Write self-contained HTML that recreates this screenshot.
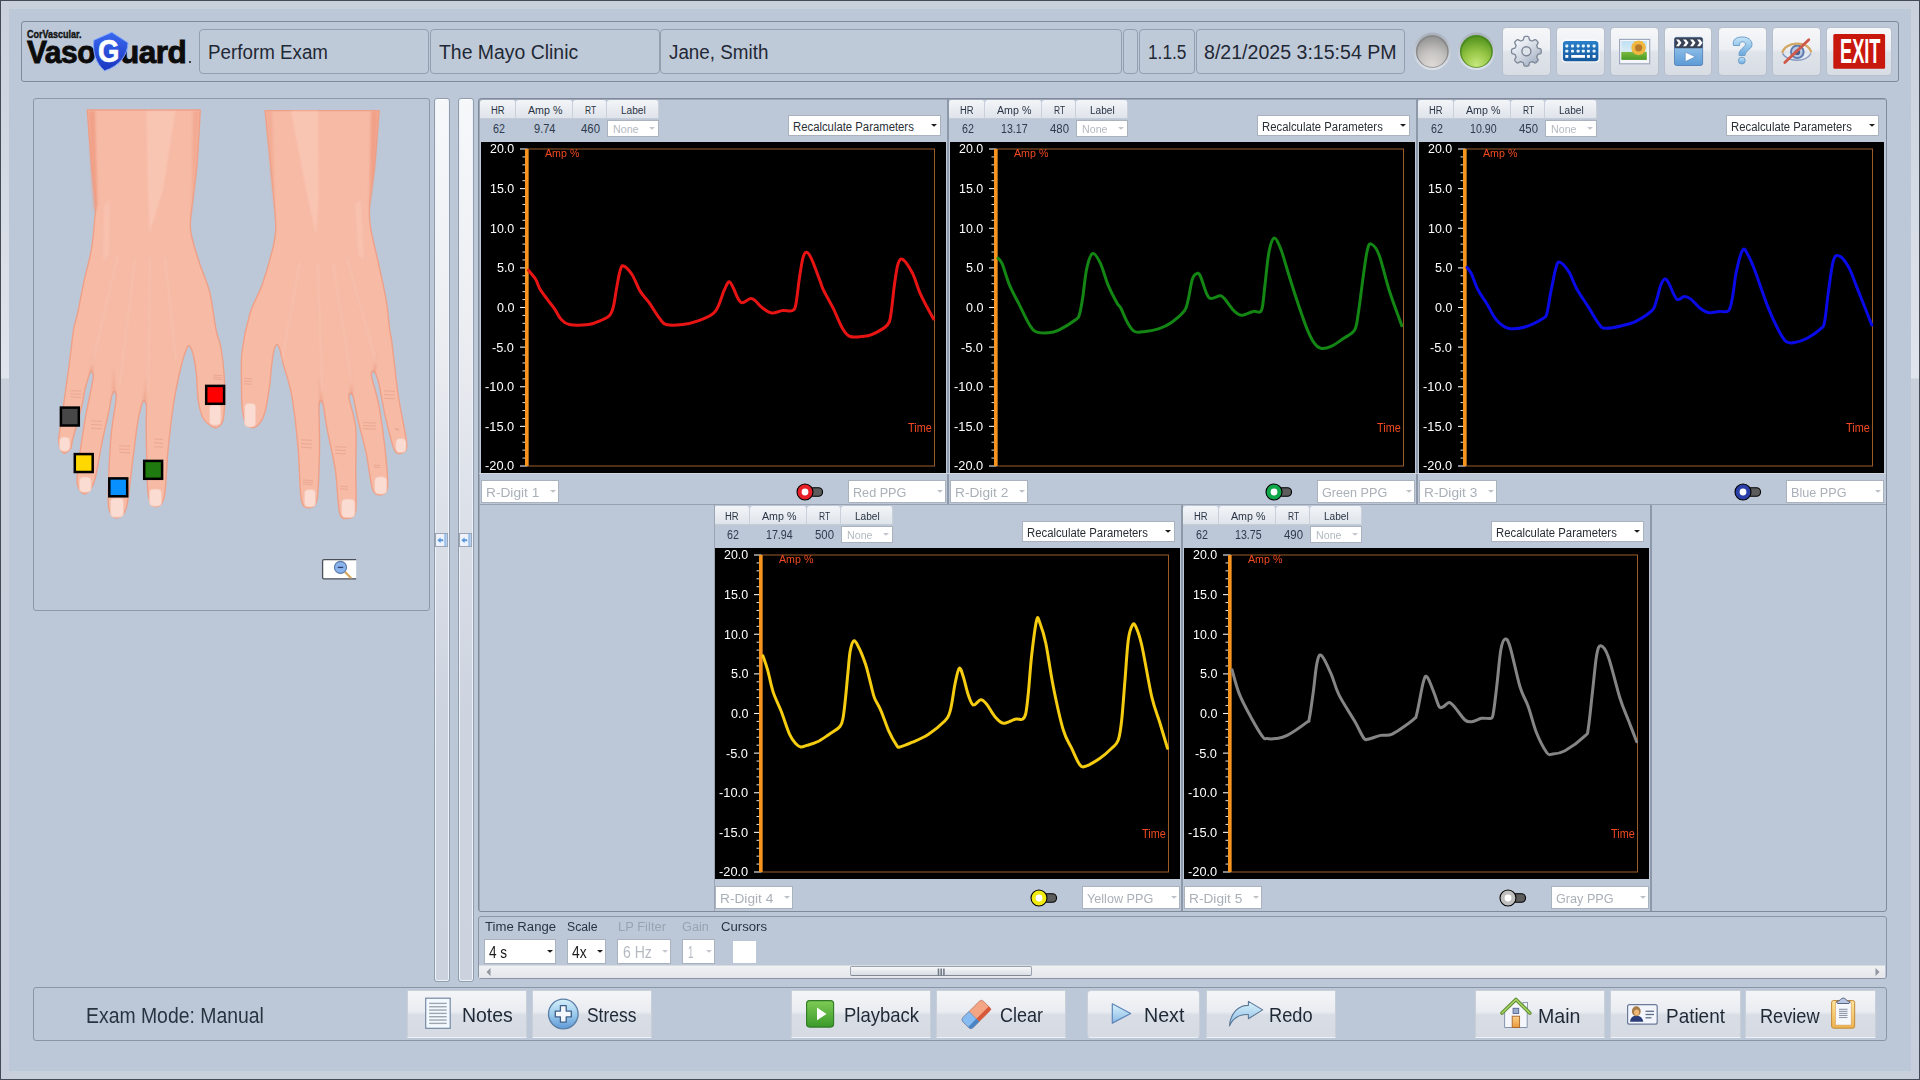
<!DOCTYPE html><html><head><meta charset="utf-8"><style>
*{margin:0;padding:0;box-sizing:border-box}
html,body{width:1920px;height:1080px;overflow:hidden}
body{position:relative;background:#454b54;font-family:"Liberation Sans", sans-serif;}
.dd{position:absolute;background:#fff;border:1px solid #c9d0da;}
.btn{position:absolute;background:linear-gradient(#eef1f6 0%,#e2e7ee 45%,#d3dae4 55%,#d9dfe8 100%);border:1px solid #aab4c2;border-radius:2px;}
.tab{position:absolute;background:linear-gradient(#eceff4,#d9dfe7);border-top:1px solid #c6ced9;border-right:1px solid #c6ced9;border-radius:3px 3px 0 0;}
</style></head><body>
<div style="position:absolute;left:1px;top:1px;width:1918px;height:1078px;background:#c8d0dc"></div><div style="position:absolute;left:9px;top:9px;width:1902px;height:1062px;background:#bcc8d8"></div><div style="position:absolute;left:1px;top:1px;width:8px;height:1078px;background:linear-gradient(#cad1dd 0px,#d2d8e2 150px,#e1e5ed 377px,#c9cfdb 378px,#c8cedb 1078px)"></div><div style="position:absolute;left:1911px;top:1px;width:8px;height:1078px;background:linear-gradient(#cad1dd 0px,#d2d8e2 150px,#e1e5ed 377px,#c9cfdb 378px,#c8cedb 1078px)"></div><div style="position:absolute;left:21px;top:21px;width:1878px;height:61px;border:1px solid #7f8a99;border-radius:3px;background:#bcc8d8"></div><div style="position:absolute;left:199px;top:29px;width:230px;height:45px;border:1px solid #939eae;border-radius:4px;background:#bfcad9"></div><div style="position:absolute;left:207.90px;top:41.52px;font-size:20.35px;color:#1f2835;white-space:nowrap;line-height:1;transform-origin:0 0;transform:scaleX(0.9229);">Perform Exam</div><div style="position:absolute;left:430px;top:29px;width:230px;height:45px;border:1px solid #939eae;border-radius:4px;background:#bfcad9"></div><div style="position:absolute;left:438.60px;top:41.52px;font-size:20.35px;color:#1f2835;white-space:nowrap;line-height:1;transform-origin:0 0;transform:scaleX(0.9541);">The Mayo Clinic</div><div style="position:absolute;left:660px;top:29px;width:462px;height:45px;border:1px solid #939eae;border-radius:4px;background:#bfcad9"></div><div style="position:absolute;left:668.50px;top:41.52px;font-size:20.35px;color:#1f2835;white-space:nowrap;line-height:1;transform-origin:0 0;transform:scaleX(0.9250);">Jane, Smith</div><div style="position:absolute;left:1123px;top:29px;width:15px;height:45px;border:1px solid #939eae;border-radius:4px;background:#bfcad9"></div><div style="position:absolute;left:1139px;top:29px;width:56px;height:45px;border:1px solid #939eae;border-radius:4px;background:#bfcad9"></div><div style="position:absolute;left:1148.00px;top:41.52px;font-size:20.35px;color:#1f2835;white-space:nowrap;line-height:1;transform-origin:0 0;transform:scaleX(0.8503);">1.1.5</div><div style="position:absolute;left:1196px;top:29px;width:209px;height:45px;border:1px solid #939eae;border-radius:4px;background:#bfcad9"></div><div style="position:absolute;left:1203.80px;top:41.52px;font-size:20.35px;color:#1f2835;white-space:nowrap;line-height:1;transform-origin:0 0;transform:scaleX(0.9619);">8/21/2025 3:15:54 PM</div><div style="position:absolute;left:1501.8px;top:27.2px;width:49.200000000000045px;height:48.6px;background:linear-gradient(#f6f7f9 0%,#eceff3 45%,#dfe4ea 52%,#d8dde5 100%);border:1px solid #b7c0cc;border-radius:4px"></div><div style="position:absolute;left:1556px;top:27.2px;width:48.90000000000009px;height:48.6px;background:linear-gradient(#f6f7f9 0%,#eceff3 45%,#dfe4ea 52%,#d8dde5 100%);border:1px solid #b7c0cc;border-radius:4px"></div><div style="position:absolute;left:1610px;top:27.2px;width:48.700000000000045px;height:48.6px;background:linear-gradient(#f6f7f9 0%,#eceff3 45%,#dfe4ea 52%,#d8dde5 100%);border:1px solid #b7c0cc;border-radius:4px"></div><div style="position:absolute;left:1664.1px;top:27.2px;width:48.40000000000009px;height:48.6px;background:linear-gradient(#f6f7f9 0%,#eceff3 45%,#dfe4ea 52%,#d8dde5 100%);border:1px solid #b7c0cc;border-radius:4px"></div><div style="position:absolute;left:1718.4px;top:27.2px;width:48.59999999999991px;height:48.6px;background:linear-gradient(#f6f7f9 0%,#eceff3 45%,#dfe4ea 52%,#d8dde5 100%);border:1px solid #b7c0cc;border-radius:4px"></div><div style="position:absolute;left:1772.3px;top:27.2px;width:48.5px;height:48.6px;background:linear-gradient(#f6f7f9 0%,#eceff3 45%,#dfe4ea 52%,#d8dde5 100%);border:1px solid #b7c0cc;border-radius:4px"></div><div style="position:absolute;left:1826.3px;top:27.2px;width:66.0px;height:48.6px;background:linear-gradient(#f6f7f9 0%,#eceff3 45%,#dfe4ea 52%,#d8dde5 100%);border:1px solid #b7c0cc;border-radius:4px"></div><svg style="position:absolute;left:0;top:0" width="1920" height="90"><defs><radialGradient id="ledG" cx="0.5" cy="0.75" r="0.7"><stop offset="0" stop-color="#dcdad6"/><stop offset="1" stop-color="#a9a9a9"/></radialGradient><radialGradient id="ledGr" cx="0.5" cy="0.85" r="0.8"><stop offset="0" stop-color="#c4e87a"/><stop offset="0.6" stop-color="#8cc040"/><stop offset="1" stop-color="#5e9e22"/></radialGradient><linearGradient id="gearG" x1="0.2" y1="0.1" x2="0.8" y2="0.9"><stop offset="0" stop-color="#f4f6fb"/><stop offset="0.5" stop-color="#d4dae4"/><stop offset="1" stop-color="#a6b2c4"/></linearGradient><linearGradient id="skyG" x1="0" y1="0" x2="0" y2="1"><stop offset="0" stop-color="#bfe0f4"/><stop offset="0.55" stop-color="#d8ecf4"/><stop offset="0.6" stop-color="#78b840"/><stop offset="1" stop-color="#4a9a24"/></linearGradient><linearGradient id="filmB" x1="0" y1="0" x2="0" y2="1"><stop offset="0" stop-color="#a8d2f2"/><stop offset="1" stop-color="#5c9ad6"/></linearGradient><linearGradient id="qG" x1="0" y1="0" x2="0" y2="1"><stop offset="0" stop-color="#c4e4f8"/><stop offset="1" stop-color="#6aa8dc"/></linearGradient><linearGradient id="shG" x1="0" y1="0" x2="0" y2="1"><stop offset="0" stop-color="#3c66e8"/><stop offset="1" stop-color="#1c3cc0"/></linearGradient></defs><linearGradient id="sockG" x1="0" y1="0" x2="0" y2="1"><stop offset="0" stop-color="#a9b1bd"/><stop offset="0.5" stop-color="#c4cbd6"/><stop offset="1" stop-color="#dde2ea"/></linearGradient><radialGradient id="ledG2" cx="0.5" cy="0.92" r="0.85"><stop offset="0" stop-color="#dedad6"/><stop offset="0.55" stop-color="#c4c2c0"/><stop offset="1" stop-color="#9c9c9c"/></radialGradient><radialGradient id="ledGr2" cx="0.5" cy="0.92" r="0.85"><stop offset="0" stop-color="#c6e87c"/><stop offset="0.55" stop-color="#94c444"/><stop offset="1" stop-color="#5e9c24"/></radialGradient><circle cx="1432.3" cy="51.3" r="18.8" fill="url(#sockG)"/><circle cx="1432.3" cy="51.3" r="16.4" fill="#8a8a8a"/><circle cx="1432.3" cy="52.2" r="14.9" fill="url(#ledG2)"/><circle cx="1476.4" cy="51.3" r="18.8" fill="url(#sockG)"/><circle cx="1476.4" cy="51.3" r="16.4" fill="#4a8a1c"/><circle cx="1476.4" cy="52.2" r="14.9" fill="url(#ledGr2)"/><path d="M1521.96,40.58 L1523.32,39.81 L1524.02,37.10 L1525.10,36.46 L1527.70,36.46 L1528.78,37.10 L1529.48,39.81 L1530.84,40.58 L1532.35,40.99 L1534.76,39.58 L1535.98,39.89 L1537.81,41.72 L1538.12,42.94 L1536.71,45.35 L1537.12,46.86 L1537.89,48.22 L1540.60,48.92 L1541.24,50.00 L1541.24,52.60 L1540.60,53.68 L1537.89,54.38 L1537.12,55.74 L1536.71,57.25 L1538.12,59.66 L1537.81,60.88 L1535.98,62.71 L1534.76,63.02 L1532.35,61.61 L1530.84,62.02 L1529.48,62.79 L1528.78,65.50 L1527.70,66.14 L1525.10,66.14 L1524.02,65.50 L1523.32,62.79 L1521.96,62.02 L1520.45,61.61 L1518.04,63.02 L1516.82,62.71 L1514.99,60.88 L1514.68,59.66 L1516.09,57.25 L1515.68,55.74 L1514.91,54.38 L1512.20,53.68 L1511.56,52.60 L1511.56,50.00 L1512.20,48.92 L1514.91,48.22 L1515.68,46.86 L1516.09,45.35 L1514.68,42.94 L1514.99,41.72 L1516.82,39.89 L1518.04,39.58 L1520.45,40.99 Z" fill="url(#gearG)" stroke="#7d8696" stroke-width="1.3" stroke-linejoin="round"/><circle cx="1526.4" cy="51.3" r="4.5" fill="#dfe3ea" stroke="#7d8696" stroke-width="1.4"/><rect x="1561.5" y="39.5" width="38.3" height="23.1" rx="4" fill="#ffffff" opacity="0.7"/><linearGradient id="kbG" x1="0" y1="0" x2="0" y2="1"><stop offset="0" stop-color="#2a7fca"/><stop offset="1" stop-color="#17589c"/></linearGradient><rect x="1562.9" y="40.9" width="35.5" height="20.3" rx="3.2" fill="url(#kbG)"/><rect x="1565.3" y="44.6" width="3" height="2.8" rx="0.8" fill="#e6f6ff"/><rect x="1571.0" y="44.6" width="3" height="2.8" rx="0.8" fill="#e6f6ff"/><rect x="1576.6" y="44.6" width="3" height="2.8" rx="0.8" fill="#e6f6ff"/><rect x="1581.8" y="44.6" width="3" height="2.8" rx="0.8" fill="#e6f6ff"/><rect x="1586.9" y="44.6" width="3" height="2.8" rx="0.8" fill="#e6f6ff"/><rect x="1592.6" y="44.6" width="3" height="2.8" rx="0.8" fill="#e6f6ff"/><rect x="1565.3" y="49.8" width="3" height="2.8" rx="0.8" fill="#e6f6ff"/><rect x="1571.0" y="49.8" width="3" height="2.8" rx="0.8" fill="#e6f6ff"/><rect x="1576.6" y="49.8" width="3" height="2.8" rx="0.8" fill="#e6f6ff"/><rect x="1581.8" y="49.8" width="3" height="2.8" rx="0.8" fill="#e6f6ff"/><rect x="1586.9" y="49.8" width="3" height="2.8" rx="0.8" fill="#e6f6ff"/><rect x="1592.6" y="49.8" width="3" height="2.8" rx="0.8" fill="#e6f6ff"/><rect x="1565.3" y="55" width="3" height="2.8" fill="#ffffff"/><rect x="1586.9" y="55" width="3" height="2.8" fill="#ffffff"/><rect x="1592.6" y="55" width="3" height="2.8" fill="#ffffff"/><rect x="1571.2" y="55" width="13.8" height="2.8" fill="#ffffff"/><rect x="1619.6" y="39.4" width="30.1" height="24.4" fill="#f4f6fa" stroke="#9aa4ba" stroke-width="1.1"/><rect x="1621.3" y="41.1" width="25.5" height="18.8" fill="url(#skyG)"/><circle cx="1643.80" cy="47.80" r="2.2" fill="#f0b840"/><circle cx="1643.10" cy="50.40" r="2.2" fill="#f0b840"/><circle cx="1641.20" cy="52.30" r="2.2" fill="#f0b840"/><circle cx="1638.60" cy="53.00" r="2.2" fill="#f0b840"/><circle cx="1636.00" cy="52.30" r="2.2" fill="#f0b840"/><circle cx="1634.10" cy="50.40" r="2.2" fill="#f0b840"/><circle cx="1633.40" cy="47.80" r="2.2" fill="#f0b840"/><circle cx="1634.10" cy="45.20" r="2.2" fill="#f0b840"/><circle cx="1636.00" cy="43.30" r="2.2" fill="#f0b840"/><circle cx="1638.60" cy="42.60" r="2.2" fill="#f0b840"/><circle cx="1641.20" cy="43.30" r="2.2" fill="#f0b840"/><circle cx="1643.10" cy="45.20" r="2.2" fill="#f0b840"/><circle cx="1638.6" cy="47.8" r="3.6" fill="#b87a2a"/><rect x="1674.5" y="37.4" width="28.1" height="28.1" rx="2" fill="url(#filmB)" stroke="#4a7ab0" stroke-width="0.8"/><rect x="1674.5" y="37.4" width="28.1" height="10.8" rx="1.5" fill="#3a4356"/><path d="M1676 39.5 L1679 39.5 L1681.5 42.8 L1679 46.2 L1676 46.2 L1678.5 42.8 Z" fill="#ffffff"/><path d="M1683 39.5 L1686 39.5 L1688.5 42.8 L1686 46.2 L1683 46.2 L1685.5 42.8 Z" fill="#ffffff"/><path d="M1690 39.5 L1693 39.5 L1695.5 42.8 L1693 46.2 L1690 46.2 L1692.5 42.8 Z" fill="#ffffff"/><path d="M1697 39.5 L1700 39.5 L1702.5 42.8 L1700 46.2 L1697 46.2 L1699.5 42.8 Z" fill="#ffffff"/><path d="M1685.3 52.1 L1695.2 56.8 L1685.3 61.6 Z" fill="#ffffff" stroke="#5a8ac0" stroke-width="0.6"/><path d="M1733.5 45.5 C1732 39 1737 37 1742.3 37 C1748 37 1752 40 1752 44.5 C1752 49.5 1745.5 50 1745 55.5 L1739 55.5 C1738.5 48.5 1745.5 47.5 1745.5 44.3 C1745.5 42.5 1744 41.8 1742.2 41.8 C1740.2 41.8 1739.5 43 1739.5 45.5 Z" fill="url(#qG)" stroke="#6e9ecc" stroke-width="1"/><circle cx="1741.8" cy="60.6" r="3.4" fill="url(#qG)" stroke="#6e9ecc" stroke-width="1"/><path d="M1782.5 53.5 C1788.5 62.5 1805.5 62.5 1811 53.5" fill="#e4eaf4" stroke="#8497bd" stroke-width="1.4"/><circle cx="1797.3" cy="51.8" r="6.3" fill="#b9c8e2" stroke="#5f7cae" stroke-width="2"/><circle cx="1797.3" cy="52.3" r="2.8" fill="#4d5f8a"/><path d="M1782.3 53 C1784.5 41.5 1808.5 39.5 1811.2 52.5" fill="none" stroke="#d4a864" stroke-width="2.3"/><line x1="1784.8" y1="62.6" x2="1808.8" y2="39.8" stroke="#cf5848" stroke-width="2.8" stroke-linecap="round"/><rect x="1833.3" y="34.1" width="51.8" height="34.7" rx="1.5" fill="#c8180e"/></svg><div style="position:absolute;left:1839.80px;top:33.96px;font-size:34.30px;color:#ffffff;white-space:nowrap;line-height:1;transform-origin:0 0;transform:scaleX(0.5306);font-weight:bold;">EXIT</div><div style="position:absolute;left:26.70px;top:30.31px;font-size:10.03px;color:#111111;white-space:nowrap;line-height:1;transform-origin:0 0;transform:scaleX(0.9000);font-weight:bold;-webkit-text-stroke:0.35px #111;">CorVascular.</div><div style="position:absolute;left:26.70px;top:36.66px;font-size:30.52px;color:#0c0c0c;white-space:nowrap;line-height:1;transform-origin:0 0;transform:scaleX(0.9822);font-weight:bold;letter-spacing:-0.5px;-webkit-text-stroke:0.9px #0c0c0c;">Vaso</div><div style="position:absolute;left:119.60px;top:36.66px;font-size:30.52px;color:#0c0c0c;white-space:nowrap;line-height:1;transform-origin:0 0;transform:scaleX(1.0305);font-weight:bold;letter-spacing:-0.5px;-webkit-text-stroke:0.9px #0c0c0c;">uard</div><div style="position:absolute;left:188.6px;top:60.8px;width:2px;height:2px;background:#111;border-radius:50%"></div><svg style="position:absolute;left:0;top:0" width="200" height="90"><path d="M111.8 32.3 L128 42.8 C127.5 55 120 66 104.5 70.8 C95.5 63 92.5 52 93.8 40.2 Z" fill="url(#shG2)" stroke="#86a8fa" stroke-width="1"/><defs><linearGradient id="shG2" x1="0" y1="0" x2="0" y2="1"><stop offset="0" stop-color="#3a68f0"/><stop offset="1" stop-color="#1a36c0"/></linearGradient></defs></svg><div style="position:absolute;left:97.80px;top:36.42px;font-size:31.40px;color:#ffffff;white-space:nowrap;line-height:1;transform-origin:0 0;transform:scaleX(0.8780);font-weight:bold;-webkit-text-stroke:0.6px #fff;">G</div><div style="position:absolute;left:33px;top:98px;width:397px;height:513px;border:1px solid #8c97a7;border-radius:3px;background:#bcc8d8"></div><svg style="position:absolute;left:0;top:0" width="440" height="620"><defs><linearGradient id="armL" x1="0" y1="0" x2="1" y2="0"><stop offset="0" stop-color="#f29e84"/><stop offset="0.1" stop-color="#f6b8a2"/><stop offset="0.5" stop-color="#f7bda8"/><stop offset="0.9" stop-color="#f6b8a2"/><stop offset="1" stop-color="#f2a088"/></linearGradient></defs><path d="M200.2,110.0 C199.7,118.1 198.4,147.7 197.0,164.0 C195.6,180.3 191.4,208.2 190.6,219.0 C189.8,229.8 190.3,229.6 191.6,236.0 C192.9,242.4 196.4,253.6 199.1,262.0 C201.8,270.4 207.1,281.8 209.7,292.0 C212.2,302.2 214.4,321.6 216.1,330.0 C217.8,338.4 219.8,341.1 221.0,348.0 C222.2,354.9 223.7,367.6 224.2,376.0 C224.7,384.4 224.8,397.4 224.6,404.0 C224.4,410.6 224.0,416.6 223.0,420.0 C222.0,423.4 219.7,426.0 218.0,427.0 C216.3,428.0 214.2,427.9 212.0,426.5 C209.8,425.1 205.1,422.0 203.0,418.0 C200.9,414.0 199.2,406.4 198.2,400.0 C197.2,393.6 197.2,381.6 196.5,375.0 C195.8,368.4 194.6,360.4 193.5,356.0 C192.4,351.6 190.6,347.1 189.5,346.0 C188.4,344.9 187.8,345.9 186.5,349.0 C185.2,352.1 182.8,358.8 180.9,367.0 C179.0,375.2 175.4,391.5 173.5,404.0 C171.6,416.5 169.4,436.5 168.0,450.4 C166.6,464.3 166.1,488.2 164.3,496.7 C162.5,505.2 158.3,506.9 155.9,506.9 C153.5,506.9 149.9,503.8 148.5,496.7 C147.1,489.6 147.0,470.7 146.7,459.6 C146.4,448.5 146.2,430.6 146.2,422.6 C146.2,414.6 146.8,409.3 146.5,406.0 C146.2,402.7 144.9,400.6 144.2,400.5 C143.4,400.4 142.5,401.6 141.5,405.0 C140.5,408.4 138.8,415.1 137.5,423.3 C136.2,431.5 134.5,446.9 132.8,459.6 C131.1,472.3 128.8,499.0 126.3,507.8 C123.8,516.6 118.7,518.0 116.1,518.0 C113.5,518.0 109.8,513.8 108.7,507.8 C107.6,501.8 108.4,488.0 108.7,478.0 C109.0,468.0 110.0,449.2 110.6,441.0 C111.2,432.8 111.6,429.9 112.5,423.3 C113.4,416.7 116.1,401.8 116.3,397.0 C116.5,392.2 114.7,391.5 114.0,391.5 C113.3,391.5 112.3,393.9 111.5,397.0 C110.7,400.1 110.0,405.6 108.7,412.0 C107.4,418.4 104.7,429.5 102.5,440.0 C100.3,450.5 96.9,473.6 94.2,481.7 C91.5,489.8 87.1,493.6 84.6,493.9 C82.0,494.2 78.0,488.8 77.2,483.7 C76.4,478.6 78.0,468.8 79.1,459.6 C80.2,450.4 83.3,430.5 84.6,422.6 C85.9,414.7 86.2,413.5 87.5,406.7 C88.8,399.9 92.8,382.4 93.3,377.0 C93.8,371.6 91.7,371.0 91.0,371.0 C90.3,371.0 89.5,374.0 88.5,377.0 C87.5,380.0 85.6,386.5 84.6,391.0 C83.6,395.5 83.5,399.3 81.7,406.7 C79.9,414.1 74.2,433.7 72.5,440.0 C70.8,446.3 72.1,446.6 70.7,448.5 C69.3,450.4 65.1,454.1 63.3,453.0 C61.5,451.9 58.8,447.0 58.7,441.0 C58.6,435.0 60.9,424.4 62.4,413.3 C63.9,402.2 67.2,379.5 68.9,367.0 C70.6,354.5 72.2,338.1 73.5,330.0 C74.8,321.9 76.1,320.4 77.7,313.0 C79.3,305.6 82.0,290.6 84.1,281.0 C86.2,271.4 89.9,258.3 91.5,249.0 C93.1,239.7 94.1,226.1 94.7,219.0 C95.3,211.9 96.3,210.2 95.8,202.0 C95.3,193.8 92.8,177.8 91.5,164.0 C90.2,150.2 87.9,118.1 87.3,110.0 L200.2,110 Z" fill="#f6baa5" stroke="#eea088" stroke-width="1.4" stroke-linejoin="round"/><path d="M379.1,110.6 C378.5,118.6 376.2,149.6 374.8,164.0 C373.4,178.4 370.1,196.9 369.5,206.5 C368.9,216.1 369.2,218.9 370.6,227.8 C372.0,236.7 376.7,254.9 379.1,266.0 C381.5,277.1 384.9,292.4 386.5,302.0 C388.1,311.6 388.9,323.9 389.7,330.0 C390.5,336.1 390.6,332.7 391.9,342.6 C393.2,352.5 396.1,380.5 398.3,395.8 C400.5,411.1 406.5,436.2 406.8,444.8 C407.1,453.4 402.3,452.8 400.4,453.4 C398.5,454.0 396.2,454.5 394.0,449.1 C391.8,443.7 387.8,426.9 385.5,417.1 C383.2,407.3 380.4,390.2 379.0,384.0 C377.6,377.8 377.2,377.9 376.5,376.0 C375.8,374.1 374.8,371.0 374.0,371.0 C373.2,371.0 370.7,370.7 371.5,376.0 C372.3,381.3 377.0,394.9 379.1,406.5 C381.2,418.1 384.2,441.3 385.5,453.4 C386.8,465.5 388.2,481.2 387.6,487.4 C387.0,493.6 383.4,494.6 381.2,494.9 C379.0,495.2 374.9,495.8 372.7,489.6 C370.5,483.4 368.5,463.9 366.3,453.4 C364.1,442.9 359.7,427.6 357.8,419.3 C355.9,411.0 354.5,401.9 353.5,398.0 C352.5,394.1 351.9,393.0 351.2,393.0 C350.5,393.0 348.3,392.8 349.0,398.0 C349.7,403.2 354.7,416.9 355.7,427.8 C356.7,438.7 355.7,457.9 355.7,470.4 C355.7,482.9 356.8,503.7 355.7,510.9 C354.6,518.1 350.6,518.0 348.2,518.3 C345.8,518.6 341.6,520.2 339.7,513.0 C337.8,505.8 337.3,483.2 335.4,470.4 C333.5,457.6 328.7,437.5 326.9,427.8 C325.1,418.1 324.3,410.0 323.5,406.0 C322.7,402.0 322.0,401.0 321.3,401.0 C320.6,401.0 319.3,398.8 319.0,406.0 C318.7,413.2 319.8,435.3 319.5,449.1 C319.2,462.9 318.7,489.3 317.3,498.1 C315.9,506.9 312.3,507.4 309.9,507.7 C307.5,508.0 303.2,509.0 301.4,500.2 C299.6,491.4 299.6,464.8 298.2,449.1 C296.8,433.4 294.1,408.6 291.8,395.8 C289.6,383.0 285.0,370.8 283.2,363.9 C281.4,357.0 280.9,352.9 280.0,350.0 C279.1,347.1 277.9,344.5 277.0,344.5 C276.1,344.5 274.8,346.7 274.0,350.0 C273.2,353.3 272.2,361.2 271.5,366.7 C270.8,372.2 270.5,379.9 269.5,386.7 C268.5,393.5 266.6,406.4 265.0,412.0 C263.4,417.6 261.0,421.7 259.0,424.0 C257.0,426.3 253.6,427.9 251.5,427.5 C249.4,427.1 246.4,423.9 245.0,421.0 C243.6,418.1 242.7,413.4 242.2,408.0 C241.7,402.6 241.5,393.4 241.5,385.0 C241.5,376.6 240.7,362.8 242.0,352.0 C243.3,341.2 247.2,322.8 250.2,312.8 C253.2,302.8 258.6,294.9 262.0,285.3 C265.4,275.7 270.5,257.7 272.6,249.1 C274.7,240.5 275.8,237.4 275.8,227.8 C275.8,218.2 274.2,202.8 272.6,185.2 C271.0,167.6 266.2,121.8 265.1,110.6 L379.1,110.6 Z" fill="#f6baa5" stroke="#eea088" stroke-width="1.4" stroke-linejoin="round"/><filter id="bl1" x="-50%" y="-10%" width="200%" height="120%"><feGaussianBlur stdDeviation="0.8"/></filter><g filter="url(#bl1)"><path d="M88.5 111 L95 111 L97.5 205 L94 212 L91 170 Z" fill="#f09c82" opacity="0.85"/><path d="M193 111 L199.5 111 L196.5 165 L191.5 218 Z" fill="#f2a48a" opacity="0.7"/><path d="M371 111 L378.5 111 L374.5 170 L369.5 208 Z" fill="#f09c82" opacity="0.85"/><path d="M266 111 L272 111 L275 215 L271 180 Z" fill="#f2a48a" opacity="0.6"/><path d="M146.5 111 L175.5 111 L163 190 L149.5 234 L147.5 180 Z" fill="#fbcdbd" opacity="0.6"/><path d="M291 111 L318 111 L318.5 200 L316 236 L305 185 Z" fill="#fbcdbd" opacity="0.6"/><path d="M104 205 L110 200 L109 255 L103 262 Z" fill="#fbcdbd" opacity="0.45"/><path d="M355 203 L361 200 L364 260 L358 255 Z" fill="#fbcdbd" opacity="0.45"/></g><g filter="url(#bl1)" opacity="0.7"><path d="M89.5 373 Q92.25 362.5 93.5 352 Q92.75 362.5 92.5 373 Z" fill="#ec9c84"/><path d="M112.5 393 Q113.5 379.5 113 366 Q114.0 379.5 115.5 393 Z" fill="#ec9c84"/><path d="M142.7 402 Q145.6 388.0 147 374 Q146.1 388.0 145.7 402 Z" fill="#ec9c84"/><path d="M319.8 403 Q319.9 389.5 318.5 376 Q320.4 389.5 322.8 403 Z" fill="#ec9c84"/><path d="M349.7 395 Q351.6 381.5 352 368 Q352.1 381.5 352.7 395 Z" fill="#ec9c84"/><path d="M372.5 373 Q375.5 361.5 377 350 Q376.0 361.5 375.5 373 Z" fill="#ec9c84"/><line x1="118" y1="255" x2="92" y2="365" stroke="#fbd0c0" stroke-width="1.6" stroke-linecap="round" opacity="0.55"/><line x1="135" y1="258" x2="120" y2="385" stroke="#fbd0c0" stroke-width="1.6" stroke-linecap="round" opacity="0.55"/><line x1="150" y1="258" x2="148" y2="392" stroke="#fbd0c0" stroke-width="1.6" stroke-linecap="round" opacity="0.55"/><line x1="165" y1="258" x2="176" y2="360" stroke="#fbd0c0" stroke-width="1.6" stroke-linecap="round" opacity="0.55"/><line x1="300" y1="262" x2="282" y2="360" stroke="#fbd0c0" stroke-width="1.6" stroke-linecap="round" opacity="0.55"/><line x1="318" y1="262" x2="322" y2="392" stroke="#fbd0c0" stroke-width="1.6" stroke-linecap="round" opacity="0.55"/><line x1="333" y1="262" x2="352" y2="385" stroke="#fbd0c0" stroke-width="1.6" stroke-linecap="round" opacity="0.55"/><line x1="347" y1="258" x2="376" y2="362" stroke="#fbd0c0" stroke-width="1.6" stroke-linecap="round" opacity="0.55"/></g><rect x="59.5" y="437.0" width="10.4" height="14.2" rx="4" fill="#fbdcd2" stroke="#f4c4b4" stroke-width="0.8"/><rect x="79.3" y="477.0" width="11.9" height="15.2" rx="4" fill="#fbdcd2" stroke="#f4c4b4" stroke-width="0.8"/><rect x="110.4" y="498.0" width="13.2" height="19.2" rx="4" fill="#fbdcd2" stroke="#f4c4b4" stroke-width="0.8"/><rect x="149.3" y="489.0" width="12.3" height="17.2" rx="4" fill="#fbdcd2" stroke="#f4c4b4" stroke-width="0.8"/><rect x="209.5" y="404.0" width="11.4" height="21.2" rx="4" fill="#fbdcd2" stroke="#f4c4b4" stroke-width="0.8"/><rect x="244.6" y="403.3" width="11.2" height="23.7" rx="4" fill="#fbdcd2" stroke="#f4c4b4" stroke-width="0.8"/><rect x="304.3" y="489.6" width="11.2" height="17.3" rx="4" fill="#fbdcd2" stroke="#f4c4b4" stroke-width="0.8"/><rect x="341.6" y="499.1" width="13.3" height="18.4" rx="4" fill="#fbdcd2" stroke="#f4c4b4" stroke-width="0.8"/><rect x="374.6" y="476.8" width="12.2" height="17.3" rx="4" fill="#fbdcd2" stroke="#f4c4b4" stroke-width="0.8"/><rect x="395.8" y="438.4" width="10.2" height="14.2" rx="4" fill="#fbdcd2" stroke="#f4c4b4" stroke-width="0.8"/><line x1="70.8" y1="390.6" x2="80.9" y2="391.2" stroke="#e39a84" stroke-width="0.7" opacity="0.8"/><line x1="70.8" y1="393.8" x2="80.9" y2="394.4" stroke="#e39a84" stroke-width="0.7" opacity="0.8"/><line x1="70.8" y1="396.9" x2="80.9" y2="397.5" stroke="#e39a84" stroke-width="0.7" opacity="0.8"/><line x1="91" y1="420.8" x2="102" y2="421.4" stroke="#e39a84" stroke-width="0.7" opacity="0.8"/><line x1="91" y1="424.5" x2="102" y2="425.1" stroke="#e39a84" stroke-width="0.7" opacity="0.8"/><line x1="91" y1="428.2" x2="102" y2="428.8" stroke="#e39a84" stroke-width="0.7" opacity="0.8"/><line x1="119" y1="445.7" x2="130" y2="446.3" stroke="#e39a84" stroke-width="0.7" opacity="0.8"/><line x1="119" y1="449.0" x2="130" y2="449.6" stroke="#e39a84" stroke-width="0.7" opacity="0.8"/><line x1="119" y1="452.3" x2="130" y2="452.9" stroke="#e39a84" stroke-width="0.7" opacity="0.8"/><line x1="154" y1="438.9" x2="163" y2="439.5" stroke="#e39a84" stroke-width="0.7" opacity="0.8"/><line x1="154" y1="442.8" x2="163" y2="443.4" stroke="#e39a84" stroke-width="0.7" opacity="0.8"/><line x1="154" y1="446.6" x2="163" y2="447.2" stroke="#e39a84" stroke-width="0.7" opacity="0.8"/><line x1="213" y1="375.0" x2="222.5" y2="375.6" stroke="#e39a84" stroke-width="0.7" opacity="0.8"/><line x1="213" y1="377.0" x2="222.5" y2="377.6" stroke="#e39a84" stroke-width="0.7" opacity="0.8"/><line x1="213" y1="379.0" x2="222.5" y2="379.6" stroke="#e39a84" stroke-width="0.7" opacity="0.8"/><line x1="244" y1="378.3" x2="252" y2="378.9" stroke="#e39a84" stroke-width="0.7" opacity="0.8"/><line x1="244" y1="381.0" x2="252" y2="381.6" stroke="#e39a84" stroke-width="0.7" opacity="0.8"/><line x1="244" y1="383.7" x2="252" y2="384.3" stroke="#e39a84" stroke-width="0.7" opacity="0.8"/><line x1="301" y1="439.8" x2="312" y2="440.4" stroke="#e39a84" stroke-width="0.7" opacity="0.8"/><line x1="301" y1="443.5" x2="312" y2="444.1" stroke="#e39a84" stroke-width="0.7" opacity="0.8"/><line x1="301" y1="447.2" x2="312" y2="447.8" stroke="#e39a84" stroke-width="0.7" opacity="0.8"/><line x1="303" y1="480.0" x2="313" y2="480.6" stroke="#e39a84" stroke-width="0.7" opacity="0.8"/><line x1="303" y1="482.0" x2="313" y2="482.6" stroke="#e39a84" stroke-width="0.7" opacity="0.8"/><line x1="303" y1="484.0" x2="313" y2="484.6" stroke="#e39a84" stroke-width="0.7" opacity="0.8"/><line x1="335" y1="446.7" x2="346" y2="447.3" stroke="#e39a84" stroke-width="0.7" opacity="0.8"/><line x1="335" y1="450.0" x2="346" y2="450.6" stroke="#e39a84" stroke-width="0.7" opacity="0.8"/><line x1="335" y1="453.3" x2="346" y2="453.9" stroke="#e39a84" stroke-width="0.7" opacity="0.8"/><line x1="340" y1="486.2" x2="348" y2="486.9" stroke="#e39a84" stroke-width="0.7" opacity="0.8"/><line x1="340" y1="488.8" x2="348" y2="489.4" stroke="#e39a84" stroke-width="0.7" opacity="0.8"/><line x1="363" y1="422.5" x2="376" y2="423.1" stroke="#e39a84" stroke-width="0.7" opacity="0.8"/><line x1="363" y1="425.5" x2="376" y2="426.1" stroke="#e39a84" stroke-width="0.7" opacity="0.8"/><line x1="363" y1="428.5" x2="376" y2="429.1" stroke="#e39a84" stroke-width="0.7" opacity="0.8"/><line x1="374" y1="465.0" x2="380" y2="465.6" stroke="#e39a84" stroke-width="0.7" opacity="0.8"/><line x1="374" y1="467.0" x2="380" y2="467.6" stroke="#e39a84" stroke-width="0.7" opacity="0.8"/><line x1="384" y1="390.8" x2="395" y2="391.4" stroke="#e39a84" stroke-width="0.7" opacity="0.8"/><line x1="384" y1="394.5" x2="395" y2="395.1" stroke="#e39a84" stroke-width="0.7" opacity="0.8"/><line x1="384" y1="398.2" x2="395" y2="398.8" stroke="#e39a84" stroke-width="0.7" opacity="0.8"/><line x1="395" y1="428.5" x2="399" y2="429.1" stroke="#e39a84" stroke-width="0.7" opacity="0.8"/><line x1="395" y1="429.5" x2="399" y2="430.1" stroke="#e39a84" stroke-width="0.7" opacity="0.8"/><rect x="60.9" y="407.6" width="17.9" height="17.9" fill="#474747" stroke="#000" stroke-width="2.5"/><rect x="74.8" y="454.1" width="17.9" height="17.9" fill="#ffd800" stroke="#000" stroke-width="2.5"/><rect x="109.3" y="478.4" width="17.9" height="17.9" fill="#0890ff" stroke="#000" stroke-width="2.5"/><rect x="144.2" y="460.9" width="17.9" height="17.9" fill="#1f7a10" stroke="#000" stroke-width="2.5"/><rect x="206.2" y="385.9" width="17.9" height="17.9" fill="#ff0000" stroke="#000" stroke-width="2.5"/><path d="M356.2 559.6 H324 Q322.6 559.6 322.6 561 V577.4 Q322.6 578.8 324 578.8 H356.2" fill="#ffffff" stroke="#4a4f58" stroke-width="1.3"/><line x1="345.5" y1="572.5" x2="350.5" y2="577.5" stroke="#d8a860" stroke-width="2.4" stroke-linecap="round"/><circle cx="340.5" cy="567.4" r="6" fill="#8ab4ec" stroke="#5a78a8" stroke-width="1.1"/><line x1="337.8" y1="567.4" x2="343.2" y2="567.4" stroke="#2a3c70" stroke-width="1.3"/></svg><div style="position:absolute;left:434px;top:98px;width:16px;height:884px;border:1px solid #929dac;border-radius:3px;background:linear-gradient(#f7f8fa 0%,#eceef2 25%,#dde1e9 45%,#cdd3df 70%,#ccd2de 100%);box-shadow:inset 1px 0 0 #eef3fb,inset -1px 0 0 #eef3fb,inset 0 1px 0 #fbfcfd,inset 0 -1px 0 #eef3fb"></div><svg style="position:absolute;left:435px;top:533px" width="14" height="14"><rect x="0.5" y="0.5" width="12" height="13" fill="#eef3fb" stroke="#9aa4b2" stroke-width="1"/><rect x="9.5" y="1" width="2.6" height="12" fill="#b4d0f2"/><line x1="10" y1="1" x2="10" y2="13" stroke="#7aa6dc" stroke-width="0.8"/><path d="M2.3 7.2 L5.6 4.4 V6.2 H8.2 V8.2 H5.6 V10 Z" fill="#5a96dc"/></svg><div style="position:absolute;left:458px;top:98px;width:16px;height:884px;border:1px solid #929dac;border-radius:3px;background:linear-gradient(#f7f8fa 0%,#eceef2 25%,#dde1e9 45%,#cdd3df 70%,#ccd2de 100%);box-shadow:inset 1px 0 0 #eef3fb,inset -1px 0 0 #eef3fb,inset 0 1px 0 #fbfcfd,inset 0 -1px 0 #eef3fb"></div><svg style="position:absolute;left:459px;top:533px" width="14" height="14"><rect x="0.5" y="0.5" width="12" height="13" fill="#eef3fb" stroke="#9aa4b2" stroke-width="1"/><rect x="9.5" y="1" width="2.6" height="12" fill="#b4d0f2"/><line x1="10" y1="1" x2="10" y2="13" stroke="#7aa6dc" stroke-width="0.8"/><path d="M2.3 7.2 L5.6 4.4 V6.2 H8.2 V8.2 H5.6 V10 Z" fill="#5a96dc"/></svg><div style="position:absolute;left:478px;top:98px;width:1409px;height:814px;border:1px solid #7f8a9a;box-shadow:inset 1px 1px 0 #9ea8b6;border-radius:3px;background:#bcc8d8"></div><div style="position:absolute;left:480px;top:100px;width:36px;height:18px;background:linear-gradient(#f3f5f8,#dfe4eb);border-right:1px solid #c9d0da;border-radius:3px 3px 0 0"></div><div style="position:absolute;left:491.40px;top:104.77px;font-size:10.61px;color:#2a3444;white-space:nowrap;line-height:1;transform-origin:0 0;transform:scaleX(0.8870);">HR</div><div style="position:absolute;left:516px;top:100px;width:57px;height:18px;background:linear-gradient(#f3f5f8,#dfe4eb);border-right:1px solid #c9d0da;border-radius:3px 3px 0 0"></div><div style="position:absolute;left:527.80px;top:104.77px;font-size:10.61px;color:#2a3444;white-space:nowrap;line-height:1;transform-origin:0 0;transform:scaleX(1.0053);">Amp %</div><div style="position:absolute;left:573px;top:100px;width:34px;height:18px;background:linear-gradient(#f3f5f8,#dfe4eb);border-right:1px solid #c9d0da;border-radius:3px 3px 0 0"></div><div style="position:absolute;left:584.70px;top:104.77px;font-size:10.61px;color:#2a3444;white-space:nowrap;line-height:1;transform-origin:0 0;transform:scaleX(0.7955);">RT</div><div style="position:absolute;left:607px;top:100px;width:52px;height:18px;background:linear-gradient(#f3f5f8,#dfe4eb);border-right:1px solid #c9d0da;border-radius:3px 3px 0 0"></div><div style="position:absolute;left:620.60px;top:104.77px;font-size:10.61px;color:#2a3444;white-space:nowrap;line-height:1;transform-origin:0 0;transform:scaleX(0.9521);">Label</div><div style="position:absolute;left:480px;top:118px;width:179px;height:1px;background:#c5ccd6"></div><div style="position:absolute;left:492.50px;top:122.94px;font-size:12.35px;color:#2f3b4d;white-space:nowrap;line-height:1;transform-origin:0 0;transform:scaleX(0.8677);">62</div><div style="position:absolute;left:534.40px;top:122.94px;font-size:12.35px;color:#2f3b4d;white-space:nowrap;line-height:1;transform-origin:0 0;transform:scaleX(0.8947);">9.74</div><div style="position:absolute;left:580.50px;top:122.94px;font-size:12.35px;color:#2f3b4d;white-space:nowrap;line-height:1;transform-origin:0 0;transform:scaleX(0.9209);">460</div><div style="position:absolute;left:607px;top:120px;width:51.5px;height:17px;background:#fff;border:1px solid #aab2bd"></div><div style="position:absolute;left:612.80px;top:123.77px;font-size:10.90px;color:#b4b9c1;white-space:nowrap;line-height:1;transform-origin:0 0;transform:scaleX(0.9787);">None</div><svg style="position:absolute;left:648.6px;top:127.0px" width="7" height="4"><path d="M0 0 L6 0 L3.0 2.7 Z" fill="#c4c8ce"/></svg><div style="position:absolute;left:787.6px;top:115.4px;width:153.89999999999998px;height:20.799999999999983px;background:#fff;border:1px solid #aab2bd"></div><div style="position:absolute;left:792.50px;top:119.92px;font-size:13.08px;color:#2a2f36;white-space:nowrap;line-height:1;transform-origin:0 0;transform:scaleX(0.8655);">Recalculate Parameters</div><svg style="position:absolute;left:931.3px;top:124.3px" width="7" height="4"><path d="M0 0 L6 0 L3.0 2.7 Z" fill="#1d1d1d"/></svg><div style="position:absolute;left:481px;top:142px;width:465px;height:331px;background:#000"></div><svg style="position:absolute;left:0;top:0" width="1920" height="1080"><rect x="528.0" y="149" width="406.5" height="317" fill="none" stroke="#9c5c28" stroke-width="1"/><line x1="520" y1="149.00" x2="527.5" y2="149.00" stroke="#f2f2f2" stroke-width="1.1"/><line x1="522.5" y1="156.93" x2="527.5" y2="156.93" stroke="#e4e4e4" stroke-width="1"/><line x1="522.5" y1="164.85" x2="527.5" y2="164.85" stroke="#e4e4e4" stroke-width="1"/><line x1="522.5" y1="172.78" x2="527.5" y2="172.78" stroke="#e4e4e4" stroke-width="1"/><line x1="522.5" y1="180.70" x2="527.5" y2="180.70" stroke="#e4e4e4" stroke-width="1"/><line x1="520" y1="188.62" x2="527.5" y2="188.62" stroke="#f2f2f2" stroke-width="1.1"/><line x1="522.5" y1="196.55" x2="527.5" y2="196.55" stroke="#e4e4e4" stroke-width="1"/><line x1="522.5" y1="204.47" x2="527.5" y2="204.47" stroke="#e4e4e4" stroke-width="1"/><line x1="522.5" y1="212.40" x2="527.5" y2="212.40" stroke="#e4e4e4" stroke-width="1"/><line x1="522.5" y1="220.32" x2="527.5" y2="220.32" stroke="#e4e4e4" stroke-width="1"/><line x1="520" y1="228.25" x2="527.5" y2="228.25" stroke="#f2f2f2" stroke-width="1.1"/><line x1="522.5" y1="236.18" x2="527.5" y2="236.18" stroke="#e4e4e4" stroke-width="1"/><line x1="522.5" y1="244.10" x2="527.5" y2="244.10" stroke="#e4e4e4" stroke-width="1"/><line x1="522.5" y1="252.03" x2="527.5" y2="252.03" stroke="#e4e4e4" stroke-width="1"/><line x1="522.5" y1="259.95" x2="527.5" y2="259.95" stroke="#e4e4e4" stroke-width="1"/><line x1="520" y1="267.88" x2="527.5" y2="267.88" stroke="#f2f2f2" stroke-width="1.1"/><line x1="522.5" y1="275.80" x2="527.5" y2="275.80" stroke="#e4e4e4" stroke-width="1"/><line x1="522.5" y1="283.73" x2="527.5" y2="283.73" stroke="#e4e4e4" stroke-width="1"/><line x1="522.5" y1="291.65" x2="527.5" y2="291.65" stroke="#e4e4e4" stroke-width="1"/><line x1="522.5" y1="299.57" x2="527.5" y2="299.57" stroke="#e4e4e4" stroke-width="1"/><line x1="520" y1="307.50" x2="527.5" y2="307.50" stroke="#f2f2f2" stroke-width="1.1"/><line x1="522.5" y1="315.43" x2="527.5" y2="315.43" stroke="#e4e4e4" stroke-width="1"/><line x1="522.5" y1="323.35" x2="527.5" y2="323.35" stroke="#e4e4e4" stroke-width="1"/><line x1="522.5" y1="331.27" x2="527.5" y2="331.27" stroke="#e4e4e4" stroke-width="1"/><line x1="522.5" y1="339.20" x2="527.5" y2="339.20" stroke="#e4e4e4" stroke-width="1"/><line x1="520" y1="347.12" x2="527.5" y2="347.12" stroke="#f2f2f2" stroke-width="1.1"/><line x1="522.5" y1="355.05" x2="527.5" y2="355.05" stroke="#e4e4e4" stroke-width="1"/><line x1="522.5" y1="362.98" x2="527.5" y2="362.98" stroke="#e4e4e4" stroke-width="1"/><line x1="522.5" y1="370.90" x2="527.5" y2="370.90" stroke="#e4e4e4" stroke-width="1"/><line x1="522.5" y1="378.82" x2="527.5" y2="378.82" stroke="#e4e4e4" stroke-width="1"/><line x1="520" y1="386.75" x2="527.5" y2="386.75" stroke="#f2f2f2" stroke-width="1.1"/><line x1="522.5" y1="394.68" x2="527.5" y2="394.68" stroke="#e4e4e4" stroke-width="1"/><line x1="522.5" y1="402.60" x2="527.5" y2="402.60" stroke="#e4e4e4" stroke-width="1"/><line x1="522.5" y1="410.52" x2="527.5" y2="410.52" stroke="#e4e4e4" stroke-width="1"/><line x1="522.5" y1="418.45" x2="527.5" y2="418.45" stroke="#e4e4e4" stroke-width="1"/><line x1="520" y1="426.38" x2="527.5" y2="426.38" stroke="#f2f2f2" stroke-width="1.1"/><line x1="522.5" y1="434.30" x2="527.5" y2="434.30" stroke="#e4e4e4" stroke-width="1"/><line x1="522.5" y1="442.23" x2="527.5" y2="442.23" stroke="#e4e4e4" stroke-width="1"/><line x1="522.5" y1="450.15" x2="527.5" y2="450.15" stroke="#e4e4e4" stroke-width="1"/><line x1="522.5" y1="458.07" x2="527.5" y2="458.07" stroke="#e4e4e4" stroke-width="1"/><line x1="520" y1="466.00" x2="527.5" y2="466.00" stroke="#f2f2f2" stroke-width="1.1"/><rect x="525.0" y="149" width="3.5" height="317" fill="#f7941d"/><path d="M528.4,270.3 C529.6,271.8 533.7,276.2 535.6,279.3 C537.5,282.4 537.9,285.6 539.9,289.0 C541.9,292.4 545.2,296.4 547.7,299.8 C550.2,303.2 552.7,306.2 554.9,309.4 C557.1,312.6 558.5,316.5 560.9,319.0 C563.3,321.5 564.7,323.6 569.3,324.5 C573.9,325.4 583.8,325.0 588.6,324.5 C593.4,324.0 594.8,322.9 598.2,321.5 C601.6,320.1 606.5,318.4 609.0,316.0 C611.5,313.6 612.1,311.3 613.3,307.0 C614.5,302.7 615.2,296.0 616.3,290.0 C617.4,284.0 618.8,275.0 620.0,271.0 C621.2,267.0 621.5,265.4 623.5,266.0 C625.5,266.6 629.2,270.3 632.0,274.5 C634.8,278.7 637.5,286.8 640.3,291.4 C643.1,296.0 645.6,297.7 648.8,302.2 C652.0,306.7 656.7,314.7 659.6,318.4 C662.5,322.1 662.4,323.5 666.2,324.5 C670.0,325.5 677.2,325.1 682.5,324.5 C687.8,323.9 692.6,323.0 698.0,320.9 C703.4,318.8 710.6,316.9 715.0,311.8 C719.4,306.7 721.9,295.2 724.2,290.2 C726.5,285.2 727.5,282.1 729.0,281.7 C730.5,281.3 731.7,285.0 733.2,287.8 C734.7,290.6 736.5,296.1 738.0,298.6 C739.5,301.1 740.3,302.8 742.3,302.8 C744.3,302.8 748.0,299.0 750.1,298.6 C752.2,298.2 752.9,298.9 754.9,300.4 C756.9,301.9 759.3,305.5 762.1,307.6 C764.9,309.7 768.3,312.5 771.7,313.0 C775.1,313.5 779.2,311.0 782.6,310.6 C786.0,310.2 790.0,311.6 792.2,310.6 C794.4,309.6 794.6,310.0 795.8,304.6 C797.0,299.2 798.2,285.9 799.4,278.1 C800.6,270.3 801.8,262.0 803.0,257.7 C804.2,253.4 805.2,252.1 806.6,252.3 C808.0,252.5 809.3,254.2 811.5,258.9 C813.7,263.6 817.9,275.3 819.9,280.5 C821.9,285.7 821.3,285.6 823.5,290.2 C825.7,294.8 829.9,301.8 833.1,308.2 C836.3,314.6 839.9,324.0 842.7,328.7 C845.5,333.4 846.8,335.2 850.0,336.5 C853.2,337.8 858.4,336.8 862.0,336.5 C865.6,336.2 867.4,336.6 871.6,334.7 C875.8,332.8 884.1,328.5 887.3,325.1 C890.5,321.7 889.7,321.0 890.9,314.2 C892.1,307.4 893.3,292.6 894.5,284.2 C895.7,275.8 896.7,267.8 898.1,263.7 C899.5,259.6 900.5,257.9 902.9,259.5 C905.3,261.1 909.7,267.8 912.5,273.3 C915.3,278.8 917.4,287.0 919.8,292.6 C922.2,298.2 924.7,302.6 927.0,307.0 C929.3,311.4 932.5,317.0 933.6,319.0" fill="none" stroke="#e81414" stroke-width="3" stroke-linejoin="round" stroke-linecap="round"/></svg><div style="position:absolute;left:489.80px;top:143.37px;font-size:12.79px;color:#ffffff;white-space:nowrap;line-height:1;transform-origin:0 0;transform:scaleX(0.9728);">20.0</div><div style="position:absolute;left:489.80px;top:183.00px;font-size:12.79px;color:#ffffff;white-space:nowrap;line-height:1;transform-origin:0 0;transform:scaleX(0.9728);">15.0</div><div style="position:absolute;left:489.80px;top:222.62px;font-size:12.79px;color:#ffffff;white-space:nowrap;line-height:1;transform-origin:0 0;transform:scaleX(0.9728);">10.0</div><div style="position:absolute;left:496.50px;top:262.25px;font-size:12.79px;color:#ffffff;white-space:nowrap;line-height:1;transform-origin:0 0;transform:scaleX(0.9843);">5.0</div><div style="position:absolute;left:496.50px;top:301.87px;font-size:12.79px;color:#ffffff;white-space:nowrap;line-height:1;transform-origin:0 0;transform:scaleX(0.9843);">0.0</div><div style="position:absolute;left:492.00px;top:341.50px;font-size:12.79px;color:#ffffff;white-space:nowrap;line-height:1;transform-origin:0 0;transform:scaleX(0.9971);">-5.0</div><div style="position:absolute;left:484.80px;top:381.12px;font-size:12.79px;color:#ffffff;white-space:nowrap;line-height:1;transform-origin:0 0;transform:scaleX(1.0013);">-10.0</div><div style="position:absolute;left:484.80px;top:420.75px;font-size:12.79px;color:#ffffff;white-space:nowrap;line-height:1;transform-origin:0 0;transform:scaleX(1.0013);">-15.0</div><div style="position:absolute;left:484.80px;top:460.37px;font-size:12.79px;color:#ffffff;white-space:nowrap;line-height:1;transform-origin:0 0;transform:scaleX(1.0013);">-20.0</div><div style="position:absolute;left:544.50px;top:149.06px;font-size:10.32px;color:#f24a22;white-space:nowrap;line-height:1;transform-origin:0 0;transform:scaleX(1.0336);">Amp %</div><div style="position:absolute;left:907.50px;top:421.96px;font-size:12.21px;color:#f24a22;white-space:nowrap;line-height:1;transform-origin:0 0;transform:scaleX(0.8884);">Time</div><div style="position:absolute;left:481px;top:479.7px;width:78px;height:23.30000000000001px;background:#fff;border:1px solid #aab2bd"></div><div style="position:absolute;left:485.60px;top:486.23px;font-size:13.66px;color:#aab0b8;white-space:nowrap;line-height:1;transform-origin:0 0;transform:scaleX(1.0029);">R-Digit 1</div><svg style="position:absolute;left:549.8px;top:489.9px" width="7" height="4"><path d="M0 0 L6 0 L3.0 2.7 Z" fill="#bcc1c8"/></svg><svg style="position:absolute;left:795.3px;top:481.5px" width="30" height="20"><rect x="14" y="5.8" width="13.5" height="8.4" rx="4" fill="#5c5c5c" stroke="#000" stroke-width="1.1"/><circle cx="10" cy="10" r="8" fill="#e8202a" stroke="#000" stroke-width="1.1"/><circle cx="10" cy="10" r="3.4" fill="#fff"/></svg><div style="position:absolute;left:847.7px;top:479.7px;width:98.29999999999995px;height:23.30000000000001px;background:#fff;border:1px solid #aab2bd"></div><div style="position:absolute;left:852.60px;top:485.93px;font-size:13.66px;color:#aab0b8;white-space:nowrap;line-height:1;transform-origin:0 0;transform:scaleX(0.9250);">Red PPG</div><svg style="position:absolute;left:936.8px;top:489.9px" width="7" height="4"><path d="M0 0 L6 0 L3.0 2.7 Z" fill="#bcc1c8"/></svg><div style="position:absolute;left:949px;top:100px;width:36px;height:18px;background:linear-gradient(#f3f5f8,#dfe4eb);border-right:1px solid #c9d0da;border-radius:3px 3px 0 0"></div><div style="position:absolute;left:960.40px;top:104.77px;font-size:10.61px;color:#2a3444;white-space:nowrap;line-height:1;transform-origin:0 0;transform:scaleX(0.8870);">HR</div><div style="position:absolute;left:985px;top:100px;width:57px;height:18px;background:linear-gradient(#f3f5f8,#dfe4eb);border-right:1px solid #c9d0da;border-radius:3px 3px 0 0"></div><div style="position:absolute;left:996.80px;top:104.77px;font-size:10.61px;color:#2a3444;white-space:nowrap;line-height:1;transform-origin:0 0;transform:scaleX(1.0053);">Amp %</div><div style="position:absolute;left:1042px;top:100px;width:34px;height:18px;background:linear-gradient(#f3f5f8,#dfe4eb);border-right:1px solid #c9d0da;border-radius:3px 3px 0 0"></div><div style="position:absolute;left:1053.70px;top:104.77px;font-size:10.61px;color:#2a3444;white-space:nowrap;line-height:1;transform-origin:0 0;transform:scaleX(0.7955);">RT</div><div style="position:absolute;left:1076px;top:100px;width:52px;height:18px;background:linear-gradient(#f3f5f8,#dfe4eb);border-right:1px solid #c9d0da;border-radius:3px 3px 0 0"></div><div style="position:absolute;left:1089.60px;top:104.77px;font-size:10.61px;color:#2a3444;white-space:nowrap;line-height:1;transform-origin:0 0;transform:scaleX(0.9521);">Label</div><div style="position:absolute;left:949px;top:118px;width:179px;height:1px;background:#c5ccd6"></div><div style="position:absolute;left:961.50px;top:122.94px;font-size:12.35px;color:#2f3b4d;white-space:nowrap;line-height:1;transform-origin:0 0;transform:scaleX(0.8677);">62</div><div style="position:absolute;left:1001.30px;top:122.94px;font-size:12.35px;color:#2f3b4d;white-space:nowrap;line-height:1;transform-origin:0 0;transform:scaleX(0.8627);">13.17</div><div style="position:absolute;left:1049.50px;top:122.94px;font-size:12.35px;color:#2f3b4d;white-space:nowrap;line-height:1;transform-origin:0 0;transform:scaleX(0.9209);">480</div><div style="position:absolute;left:1076px;top:120px;width:51.5px;height:17px;background:#fff;border:1px solid #aab2bd"></div><div style="position:absolute;left:1081.80px;top:123.77px;font-size:10.90px;color:#b4b9c1;white-space:nowrap;line-height:1;transform-origin:0 0;transform:scaleX(0.9787);">None</div><svg style="position:absolute;left:1117.6px;top:127.0px" width="7" height="4"><path d="M0 0 L6 0 L3.0 2.7 Z" fill="#c4c8ce"/></svg><div style="position:absolute;left:1256.6px;top:115.4px;width:153.9000000000001px;height:20.799999999999983px;background:#fff;border:1px solid #aab2bd"></div><div style="position:absolute;left:1261.50px;top:119.92px;font-size:13.08px;color:#2a2f36;white-space:nowrap;line-height:1;transform-origin:0 0;transform:scaleX(0.8655);">Recalculate Parameters</div><svg style="position:absolute;left:1400.3px;top:124.3px" width="7" height="4"><path d="M0 0 L6 0 L3.0 2.7 Z" fill="#1d1d1d"/></svg><div style="position:absolute;left:950px;top:142px;width:465px;height:331px;background:#000"></div><svg style="position:absolute;left:0;top:0" width="1920" height="1080"><rect x="997.0" y="149" width="406.5" height="317" fill="none" stroke="#9c5c28" stroke-width="1"/><line x1="989" y1="149.00" x2="996.5" y2="149.00" stroke="#f2f2f2" stroke-width="1.1"/><line x1="991.5" y1="156.93" x2="996.5" y2="156.93" stroke="#e4e4e4" stroke-width="1"/><line x1="991.5" y1="164.85" x2="996.5" y2="164.85" stroke="#e4e4e4" stroke-width="1"/><line x1="991.5" y1="172.78" x2="996.5" y2="172.78" stroke="#e4e4e4" stroke-width="1"/><line x1="991.5" y1="180.70" x2="996.5" y2="180.70" stroke="#e4e4e4" stroke-width="1"/><line x1="989" y1="188.62" x2="996.5" y2="188.62" stroke="#f2f2f2" stroke-width="1.1"/><line x1="991.5" y1="196.55" x2="996.5" y2="196.55" stroke="#e4e4e4" stroke-width="1"/><line x1="991.5" y1="204.47" x2="996.5" y2="204.47" stroke="#e4e4e4" stroke-width="1"/><line x1="991.5" y1="212.40" x2="996.5" y2="212.40" stroke="#e4e4e4" stroke-width="1"/><line x1="991.5" y1="220.32" x2="996.5" y2="220.32" stroke="#e4e4e4" stroke-width="1"/><line x1="989" y1="228.25" x2="996.5" y2="228.25" stroke="#f2f2f2" stroke-width="1.1"/><line x1="991.5" y1="236.18" x2="996.5" y2="236.18" stroke="#e4e4e4" stroke-width="1"/><line x1="991.5" y1="244.10" x2="996.5" y2="244.10" stroke="#e4e4e4" stroke-width="1"/><line x1="991.5" y1="252.03" x2="996.5" y2="252.03" stroke="#e4e4e4" stroke-width="1"/><line x1="991.5" y1="259.95" x2="996.5" y2="259.95" stroke="#e4e4e4" stroke-width="1"/><line x1="989" y1="267.88" x2="996.5" y2="267.88" stroke="#f2f2f2" stroke-width="1.1"/><line x1="991.5" y1="275.80" x2="996.5" y2="275.80" stroke="#e4e4e4" stroke-width="1"/><line x1="991.5" y1="283.73" x2="996.5" y2="283.73" stroke="#e4e4e4" stroke-width="1"/><line x1="991.5" y1="291.65" x2="996.5" y2="291.65" stroke="#e4e4e4" stroke-width="1"/><line x1="991.5" y1="299.57" x2="996.5" y2="299.57" stroke="#e4e4e4" stroke-width="1"/><line x1="989" y1="307.50" x2="996.5" y2="307.50" stroke="#f2f2f2" stroke-width="1.1"/><line x1="991.5" y1="315.43" x2="996.5" y2="315.43" stroke="#e4e4e4" stroke-width="1"/><line x1="991.5" y1="323.35" x2="996.5" y2="323.35" stroke="#e4e4e4" stroke-width="1"/><line x1="991.5" y1="331.27" x2="996.5" y2="331.27" stroke="#e4e4e4" stroke-width="1"/><line x1="991.5" y1="339.20" x2="996.5" y2="339.20" stroke="#e4e4e4" stroke-width="1"/><line x1="989" y1="347.12" x2="996.5" y2="347.12" stroke="#f2f2f2" stroke-width="1.1"/><line x1="991.5" y1="355.05" x2="996.5" y2="355.05" stroke="#e4e4e4" stroke-width="1"/><line x1="991.5" y1="362.98" x2="996.5" y2="362.98" stroke="#e4e4e4" stroke-width="1"/><line x1="991.5" y1="370.90" x2="996.5" y2="370.90" stroke="#e4e4e4" stroke-width="1"/><line x1="991.5" y1="378.82" x2="996.5" y2="378.82" stroke="#e4e4e4" stroke-width="1"/><line x1="989" y1="386.75" x2="996.5" y2="386.75" stroke="#f2f2f2" stroke-width="1.1"/><line x1="991.5" y1="394.68" x2="996.5" y2="394.68" stroke="#e4e4e4" stroke-width="1"/><line x1="991.5" y1="402.60" x2="996.5" y2="402.60" stroke="#e4e4e4" stroke-width="1"/><line x1="991.5" y1="410.52" x2="996.5" y2="410.52" stroke="#e4e4e4" stroke-width="1"/><line x1="991.5" y1="418.45" x2="996.5" y2="418.45" stroke="#e4e4e4" stroke-width="1"/><line x1="989" y1="426.38" x2="996.5" y2="426.38" stroke="#f2f2f2" stroke-width="1.1"/><line x1="991.5" y1="434.30" x2="996.5" y2="434.30" stroke="#e4e4e4" stroke-width="1"/><line x1="991.5" y1="442.23" x2="996.5" y2="442.23" stroke="#e4e4e4" stroke-width="1"/><line x1="991.5" y1="450.15" x2="996.5" y2="450.15" stroke="#e4e4e4" stroke-width="1"/><line x1="991.5" y1="458.07" x2="996.5" y2="458.07" stroke="#e4e4e4" stroke-width="1"/><line x1="989" y1="466.00" x2="996.5" y2="466.00" stroke="#f2f2f2" stroke-width="1.1"/><rect x="994.0" y="149" width="3.5" height="317" fill="#f7941d"/><path d="M998.0,258.2 C998.7,259.2 1000.4,259.7 1002.3,264.1 C1004.2,268.5 1006.5,277.9 1009.4,284.8 C1012.3,291.7 1016.5,299.1 1019.8,305.6 C1023.0,312.1 1026.3,319.4 1028.9,323.7 C1031.5,328.0 1032.2,330.0 1035.4,331.5 C1038.6,333.0 1044.4,333.0 1048.3,332.8 C1052.2,332.6 1054.2,332.4 1058.7,330.2 C1063.2,328.0 1072.1,322.4 1075.6,319.8 C1079.0,317.2 1078.2,318.3 1079.4,314.6 C1080.6,310.9 1081.5,305.4 1082.7,297.8 C1083.9,290.2 1085.0,276.7 1086.6,269.3 C1088.2,261.9 1090.1,254.8 1092.4,253.7 C1094.7,252.6 1097.6,257.6 1100.2,262.8 C1102.8,268.0 1105.2,278.1 1108.0,284.8 C1110.8,291.5 1114.8,299.1 1117.0,303.0 C1119.2,306.9 1119.2,305.0 1120.9,308.2 C1122.6,311.4 1125.1,318.5 1127.4,322.4 C1129.7,326.3 1131.5,330.0 1134.5,331.5 C1137.5,333.0 1141.6,331.9 1145.6,331.5 C1149.6,331.1 1154.2,330.4 1158.5,328.9 C1162.8,327.4 1167.2,325.4 1171.5,322.4 C1175.8,319.4 1181.7,314.6 1184.5,310.7 C1187.3,306.8 1187.0,304.3 1188.3,299.1 C1189.6,293.9 1190.9,283.8 1192.2,279.6 C1193.5,275.4 1195.0,274.5 1196.3,273.8 C1197.6,273.1 1198.5,272.4 1200.2,275.7 C1201.9,279.0 1204.9,290.1 1206.7,293.9 C1208.5,297.7 1208.9,298.1 1211.2,298.4 C1213.5,298.7 1218.0,295.7 1220.3,295.8 C1222.6,295.9 1222.5,296.6 1224.8,299.1 C1227.1,301.6 1231.1,308.0 1233.9,310.7 C1236.7,313.4 1238.5,315.2 1241.7,315.3 C1244.9,315.4 1250.3,311.9 1253.3,311.4 C1256.3,310.8 1258.3,312.8 1259.8,312.0 C1261.3,311.2 1261.5,311.4 1262.4,306.9 C1263.3,302.4 1263.9,293.9 1265.0,284.8 C1266.1,275.7 1267.4,260.2 1268.9,252.4 C1270.4,244.6 1272.1,238.8 1274.1,238.1 C1276.0,237.4 1278.2,242.7 1280.6,248.5 C1283.0,254.3 1285.7,265.0 1288.3,273.2 C1290.9,281.4 1293.1,288.7 1296.1,297.8 C1299.1,306.9 1303.5,320.0 1306.5,327.6 C1309.5,335.2 1311.9,339.8 1314.3,343.2 C1316.7,346.6 1317.9,347.8 1320.7,348.3 C1323.5,348.8 1327.2,348.1 1331.1,346.4 C1335.0,344.7 1340.2,340.7 1344.1,338.0 C1348.0,335.3 1352.1,334.3 1354.5,330.2 C1356.9,326.1 1356.8,322.6 1358.3,313.3 C1359.8,304.0 1362.0,285.0 1363.5,274.4 C1365.0,263.8 1366.1,254.9 1367.4,249.8 C1368.7,244.7 1369.3,243.1 1371.3,244.0 C1373.2,244.9 1376.1,247.1 1379.1,255.0 C1382.1,262.9 1385.7,279.5 1389.5,291.3 C1393.3,303.1 1399.8,320.0 1401.8,325.7" fill="none" stroke="#138613" stroke-width="3" stroke-linejoin="round" stroke-linecap="round"/></svg><div style="position:absolute;left:958.80px;top:143.37px;font-size:12.79px;color:#ffffff;white-space:nowrap;line-height:1;transform-origin:0 0;transform:scaleX(0.9728);">20.0</div><div style="position:absolute;left:958.80px;top:183.00px;font-size:12.79px;color:#ffffff;white-space:nowrap;line-height:1;transform-origin:0 0;transform:scaleX(0.9728);">15.0</div><div style="position:absolute;left:958.80px;top:222.62px;font-size:12.79px;color:#ffffff;white-space:nowrap;line-height:1;transform-origin:0 0;transform:scaleX(0.9728);">10.0</div><div style="position:absolute;left:965.50px;top:262.25px;font-size:12.79px;color:#ffffff;white-space:nowrap;line-height:1;transform-origin:0 0;transform:scaleX(0.9843);">5.0</div><div style="position:absolute;left:965.50px;top:301.87px;font-size:12.79px;color:#ffffff;white-space:nowrap;line-height:1;transform-origin:0 0;transform:scaleX(0.9843);">0.0</div><div style="position:absolute;left:961.00px;top:341.50px;font-size:12.79px;color:#ffffff;white-space:nowrap;line-height:1;transform-origin:0 0;transform:scaleX(0.9971);">-5.0</div><div style="position:absolute;left:953.80px;top:381.12px;font-size:12.79px;color:#ffffff;white-space:nowrap;line-height:1;transform-origin:0 0;transform:scaleX(1.0013);">-10.0</div><div style="position:absolute;left:953.80px;top:420.75px;font-size:12.79px;color:#ffffff;white-space:nowrap;line-height:1;transform-origin:0 0;transform:scaleX(1.0013);">-15.0</div><div style="position:absolute;left:953.80px;top:460.37px;font-size:12.79px;color:#ffffff;white-space:nowrap;line-height:1;transform-origin:0 0;transform:scaleX(1.0013);">-20.0</div><div style="position:absolute;left:1013.50px;top:149.06px;font-size:10.32px;color:#f24a22;white-space:nowrap;line-height:1;transform-origin:0 0;transform:scaleX(1.0336);">Amp %</div><div style="position:absolute;left:1376.50px;top:421.96px;font-size:12.21px;color:#f24a22;white-space:nowrap;line-height:1;transform-origin:0 0;transform:scaleX(0.8884);">Time</div><div style="position:absolute;left:950px;top:479.7px;width:78px;height:23.30000000000001px;background:#fff;border:1px solid #aab2bd"></div><div style="position:absolute;left:954.60px;top:486.23px;font-size:13.66px;color:#aab0b8;white-space:nowrap;line-height:1;transform-origin:0 0;transform:scaleX(1.0029);">R-Digit 2</div><svg style="position:absolute;left:1018.8px;top:489.9px" width="7" height="4"><path d="M0 0 L6 0 L3.0 2.7 Z" fill="#bcc1c8"/></svg><svg style="position:absolute;left:1264.3px;top:481.5px" width="30" height="20"><rect x="14" y="5.8" width="13.5" height="8.4" rx="4" fill="#5c5c5c" stroke="#000" stroke-width="1.1"/><circle cx="10" cy="10" r="8" fill="#10a84a" stroke="#000" stroke-width="1.1"/><circle cx="10" cy="10" r="3.4" fill="#fff"/></svg><div style="position:absolute;left:1316.7px;top:479.7px;width:98.29999999999995px;height:23.30000000000001px;background:#fff;border:1px solid #aab2bd"></div><div style="position:absolute;left:1321.60px;top:485.93px;font-size:13.66px;color:#aab0b8;white-space:nowrap;line-height:1;transform-origin:0 0;transform:scaleX(0.9250);">Green PPG</div><svg style="position:absolute;left:1405.8px;top:489.9px" width="7" height="4"><path d="M0 0 L6 0 L3.0 2.7 Z" fill="#bcc1c8"/></svg><div style="position:absolute;left:1418px;top:100px;width:36px;height:18px;background:linear-gradient(#f3f5f8,#dfe4eb);border-right:1px solid #c9d0da;border-radius:3px 3px 0 0"></div><div style="position:absolute;left:1429.40px;top:104.77px;font-size:10.61px;color:#2a3444;white-space:nowrap;line-height:1;transform-origin:0 0;transform:scaleX(0.8870);">HR</div><div style="position:absolute;left:1454px;top:100px;width:57px;height:18px;background:linear-gradient(#f3f5f8,#dfe4eb);border-right:1px solid #c9d0da;border-radius:3px 3px 0 0"></div><div style="position:absolute;left:1465.80px;top:104.77px;font-size:10.61px;color:#2a3444;white-space:nowrap;line-height:1;transform-origin:0 0;transform:scaleX(1.0053);">Amp %</div><div style="position:absolute;left:1511px;top:100px;width:34px;height:18px;background:linear-gradient(#f3f5f8,#dfe4eb);border-right:1px solid #c9d0da;border-radius:3px 3px 0 0"></div><div style="position:absolute;left:1522.70px;top:104.77px;font-size:10.61px;color:#2a3444;white-space:nowrap;line-height:1;transform-origin:0 0;transform:scaleX(0.7955);">RT</div><div style="position:absolute;left:1545px;top:100px;width:52px;height:18px;background:linear-gradient(#f3f5f8,#dfe4eb);border-right:1px solid #c9d0da;border-radius:3px 3px 0 0"></div><div style="position:absolute;left:1558.60px;top:104.77px;font-size:10.61px;color:#2a3444;white-space:nowrap;line-height:1;transform-origin:0 0;transform:scaleX(0.9521);">Label</div><div style="position:absolute;left:1418px;top:118px;width:179px;height:1px;background:#c5ccd6"></div><div style="position:absolute;left:1430.50px;top:122.94px;font-size:12.35px;color:#2f3b4d;white-space:nowrap;line-height:1;transform-origin:0 0;transform:scaleX(0.8677);">62</div><div style="position:absolute;left:1470.30px;top:122.94px;font-size:12.35px;color:#2f3b4d;white-space:nowrap;line-height:1;transform-origin:0 0;transform:scaleX(0.8627);">10.90</div><div style="position:absolute;left:1518.50px;top:122.94px;font-size:12.35px;color:#2f3b4d;white-space:nowrap;line-height:1;transform-origin:0 0;transform:scaleX(0.9209);">450</div><div style="position:absolute;left:1545px;top:120px;width:51.5px;height:17px;background:#fff;border:1px solid #aab2bd"></div><div style="position:absolute;left:1550.80px;top:123.77px;font-size:10.90px;color:#b4b9c1;white-space:nowrap;line-height:1;transform-origin:0 0;transform:scaleX(0.9787);">None</div><svg style="position:absolute;left:1586.6px;top:127.0px" width="7" height="4"><path d="M0 0 L6 0 L3.0 2.7 Z" fill="#c4c8ce"/></svg><div style="position:absolute;left:1725.6px;top:115.4px;width:153.9000000000001px;height:20.799999999999983px;background:#fff;border:1px solid #aab2bd"></div><div style="position:absolute;left:1730.50px;top:119.92px;font-size:13.08px;color:#2a2f36;white-space:nowrap;line-height:1;transform-origin:0 0;transform:scaleX(0.8655);">Recalculate Parameters</div><svg style="position:absolute;left:1869.3px;top:124.3px" width="7" height="4"><path d="M0 0 L6 0 L3.0 2.7 Z" fill="#1d1d1d"/></svg><div style="position:absolute;left:1419px;top:142px;width:465px;height:331px;background:#000"></div><svg style="position:absolute;left:0;top:0" width="1920" height="1080"><rect x="1466.0" y="149" width="406.5" height="317" fill="none" stroke="#9c5c28" stroke-width="1"/><line x1="1458" y1="149.00" x2="1465.5" y2="149.00" stroke="#f2f2f2" stroke-width="1.1"/><line x1="1460.5" y1="156.93" x2="1465.5" y2="156.93" stroke="#e4e4e4" stroke-width="1"/><line x1="1460.5" y1="164.85" x2="1465.5" y2="164.85" stroke="#e4e4e4" stroke-width="1"/><line x1="1460.5" y1="172.78" x2="1465.5" y2="172.78" stroke="#e4e4e4" stroke-width="1"/><line x1="1460.5" y1="180.70" x2="1465.5" y2="180.70" stroke="#e4e4e4" stroke-width="1"/><line x1="1458" y1="188.62" x2="1465.5" y2="188.62" stroke="#f2f2f2" stroke-width="1.1"/><line x1="1460.5" y1="196.55" x2="1465.5" y2="196.55" stroke="#e4e4e4" stroke-width="1"/><line x1="1460.5" y1="204.47" x2="1465.5" y2="204.47" stroke="#e4e4e4" stroke-width="1"/><line x1="1460.5" y1="212.40" x2="1465.5" y2="212.40" stroke="#e4e4e4" stroke-width="1"/><line x1="1460.5" y1="220.32" x2="1465.5" y2="220.32" stroke="#e4e4e4" stroke-width="1"/><line x1="1458" y1="228.25" x2="1465.5" y2="228.25" stroke="#f2f2f2" stroke-width="1.1"/><line x1="1460.5" y1="236.18" x2="1465.5" y2="236.18" stroke="#e4e4e4" stroke-width="1"/><line x1="1460.5" y1="244.10" x2="1465.5" y2="244.10" stroke="#e4e4e4" stroke-width="1"/><line x1="1460.5" y1="252.03" x2="1465.5" y2="252.03" stroke="#e4e4e4" stroke-width="1"/><line x1="1460.5" y1="259.95" x2="1465.5" y2="259.95" stroke="#e4e4e4" stroke-width="1"/><line x1="1458" y1="267.88" x2="1465.5" y2="267.88" stroke="#f2f2f2" stroke-width="1.1"/><line x1="1460.5" y1="275.80" x2="1465.5" y2="275.80" stroke="#e4e4e4" stroke-width="1"/><line x1="1460.5" y1="283.73" x2="1465.5" y2="283.73" stroke="#e4e4e4" stroke-width="1"/><line x1="1460.5" y1="291.65" x2="1465.5" y2="291.65" stroke="#e4e4e4" stroke-width="1"/><line x1="1460.5" y1="299.57" x2="1465.5" y2="299.57" stroke="#e4e4e4" stroke-width="1"/><line x1="1458" y1="307.50" x2="1465.5" y2="307.50" stroke="#f2f2f2" stroke-width="1.1"/><line x1="1460.5" y1="315.43" x2="1465.5" y2="315.43" stroke="#e4e4e4" stroke-width="1"/><line x1="1460.5" y1="323.35" x2="1465.5" y2="323.35" stroke="#e4e4e4" stroke-width="1"/><line x1="1460.5" y1="331.27" x2="1465.5" y2="331.27" stroke="#e4e4e4" stroke-width="1"/><line x1="1460.5" y1="339.20" x2="1465.5" y2="339.20" stroke="#e4e4e4" stroke-width="1"/><line x1="1458" y1="347.12" x2="1465.5" y2="347.12" stroke="#f2f2f2" stroke-width="1.1"/><line x1="1460.5" y1="355.05" x2="1465.5" y2="355.05" stroke="#e4e4e4" stroke-width="1"/><line x1="1460.5" y1="362.98" x2="1465.5" y2="362.98" stroke="#e4e4e4" stroke-width="1"/><line x1="1460.5" y1="370.90" x2="1465.5" y2="370.90" stroke="#e4e4e4" stroke-width="1"/><line x1="1460.5" y1="378.82" x2="1465.5" y2="378.82" stroke="#e4e4e4" stroke-width="1"/><line x1="1458" y1="386.75" x2="1465.5" y2="386.75" stroke="#f2f2f2" stroke-width="1.1"/><line x1="1460.5" y1="394.68" x2="1465.5" y2="394.68" stroke="#e4e4e4" stroke-width="1"/><line x1="1460.5" y1="402.60" x2="1465.5" y2="402.60" stroke="#e4e4e4" stroke-width="1"/><line x1="1460.5" y1="410.52" x2="1465.5" y2="410.52" stroke="#e4e4e4" stroke-width="1"/><line x1="1460.5" y1="418.45" x2="1465.5" y2="418.45" stroke="#e4e4e4" stroke-width="1"/><line x1="1458" y1="426.38" x2="1465.5" y2="426.38" stroke="#f2f2f2" stroke-width="1.1"/><line x1="1460.5" y1="434.30" x2="1465.5" y2="434.30" stroke="#e4e4e4" stroke-width="1"/><line x1="1460.5" y1="442.23" x2="1465.5" y2="442.23" stroke="#e4e4e4" stroke-width="1"/><line x1="1460.5" y1="450.15" x2="1465.5" y2="450.15" stroke="#e4e4e4" stroke-width="1"/><line x1="1460.5" y1="458.07" x2="1465.5" y2="458.07" stroke="#e4e4e4" stroke-width="1"/><line x1="1458" y1="466.00" x2="1465.5" y2="466.00" stroke="#f2f2f2" stroke-width="1.1"/><rect x="1463.0" y="149" width="3.5" height="317" fill="#f7941d"/><path d="M1467.1,267.3 C1467.9,268.5 1469.9,270.6 1471.7,274.4 C1473.5,278.2 1475.5,285.0 1478.1,290.0 C1480.7,295.0 1484.2,299.3 1487.2,304.3 C1490.2,309.3 1492.8,315.8 1496.3,319.8 C1499.8,323.8 1503.2,327.0 1508.0,328.2 C1512.8,329.4 1519.0,328.6 1524.8,327.0 C1530.6,325.4 1539.3,320.8 1543.0,318.5 C1546.7,316.2 1545.6,317.6 1546.9,313.3 C1548.2,309.0 1549.2,300.2 1550.7,292.6 C1552.2,285.1 1554.4,273.1 1555.9,268.0 C1557.4,262.9 1557.6,261.5 1559.8,262.1 C1562.0,262.8 1566.1,267.5 1568.9,271.9 C1571.7,276.3 1573.5,282.9 1576.7,288.7 C1579.9,294.5 1584.6,301.1 1588.3,306.9 C1592.0,312.7 1595.9,320.1 1598.7,323.7 C1601.5,327.2 1601.3,327.9 1605.2,328.2 C1609.1,328.5 1616.8,326.9 1622.0,325.7 C1627.2,324.5 1631.3,323.6 1636.3,321.1 C1641.3,318.6 1648.7,313.7 1651.9,310.7 C1655.1,307.7 1654.2,307.3 1655.7,303.0 C1657.2,298.7 1659.4,288.8 1660.9,284.8 C1662.5,280.8 1663.7,279.2 1665.0,279.0 C1666.3,278.8 1667.0,280.1 1668.9,283.5 C1670.9,286.9 1674.1,296.9 1676.7,299.1 C1679.3,301.3 1682.0,296.5 1684.4,296.5 C1686.8,296.5 1688.3,297.2 1690.9,299.1 C1693.5,301.1 1697.0,305.9 1700.0,308.2 C1703.0,310.5 1705.9,312.2 1709.1,312.7 C1712.3,313.2 1716.2,311.7 1719.4,311.4 C1722.6,311.1 1726.3,313.0 1728.5,310.7 C1730.7,308.4 1731.1,304.3 1732.4,297.8 C1733.7,291.3 1734.6,279.9 1736.3,271.9 C1738.0,263.9 1740.8,252.6 1742.8,249.8 C1744.8,247.0 1746.1,251.8 1748.0,255.0 C1749.9,258.2 1751.2,260.9 1754.4,269.3 C1757.6,277.7 1763.7,296.1 1767.4,305.6 C1771.1,315.1 1773.5,320.4 1776.5,326.3 C1779.5,332.2 1782.6,338.5 1785.6,341.2 C1788.6,343.9 1790.9,343.0 1794.6,342.5 C1798.3,342.0 1803.3,340.3 1807.6,338.0 C1811.9,335.7 1817.8,331.5 1820.6,328.9 C1823.4,326.3 1823.2,328.4 1824.5,322.4 C1825.8,316.3 1826.8,303.0 1828.3,292.6 C1829.8,282.2 1831.5,266.2 1833.5,260.2 C1835.5,254.1 1837.4,255.0 1840.0,256.3 C1842.6,257.6 1846.3,262.8 1849.1,268.0 C1851.9,273.2 1853.1,277.9 1856.9,287.4 C1860.7,296.9 1869.3,318.7 1871.8,325.0" fill="none" stroke="#0a0ae6" stroke-width="3" stroke-linejoin="round" stroke-linecap="round"/></svg><div style="position:absolute;left:1427.80px;top:143.37px;font-size:12.79px;color:#ffffff;white-space:nowrap;line-height:1;transform-origin:0 0;transform:scaleX(0.9728);">20.0</div><div style="position:absolute;left:1427.80px;top:183.00px;font-size:12.79px;color:#ffffff;white-space:nowrap;line-height:1;transform-origin:0 0;transform:scaleX(0.9728);">15.0</div><div style="position:absolute;left:1427.80px;top:222.62px;font-size:12.79px;color:#ffffff;white-space:nowrap;line-height:1;transform-origin:0 0;transform:scaleX(0.9728);">10.0</div><div style="position:absolute;left:1434.50px;top:262.25px;font-size:12.79px;color:#ffffff;white-space:nowrap;line-height:1;transform-origin:0 0;transform:scaleX(0.9843);">5.0</div><div style="position:absolute;left:1434.50px;top:301.87px;font-size:12.79px;color:#ffffff;white-space:nowrap;line-height:1;transform-origin:0 0;transform:scaleX(0.9843);">0.0</div><div style="position:absolute;left:1430.00px;top:341.50px;font-size:12.79px;color:#ffffff;white-space:nowrap;line-height:1;transform-origin:0 0;transform:scaleX(0.9971);">-5.0</div><div style="position:absolute;left:1422.80px;top:381.12px;font-size:12.79px;color:#ffffff;white-space:nowrap;line-height:1;transform-origin:0 0;transform:scaleX(1.0013);">-10.0</div><div style="position:absolute;left:1422.80px;top:420.75px;font-size:12.79px;color:#ffffff;white-space:nowrap;line-height:1;transform-origin:0 0;transform:scaleX(1.0013);">-15.0</div><div style="position:absolute;left:1422.80px;top:460.37px;font-size:12.79px;color:#ffffff;white-space:nowrap;line-height:1;transform-origin:0 0;transform:scaleX(1.0013);">-20.0</div><div style="position:absolute;left:1482.50px;top:149.06px;font-size:10.32px;color:#f24a22;white-space:nowrap;line-height:1;transform-origin:0 0;transform:scaleX(1.0336);">Amp %</div><div style="position:absolute;left:1845.50px;top:421.96px;font-size:12.21px;color:#f24a22;white-space:nowrap;line-height:1;transform-origin:0 0;transform:scaleX(0.8884);">Time</div><div style="position:absolute;left:1419px;top:479.7px;width:78px;height:23.30000000000001px;background:#fff;border:1px solid #aab2bd"></div><div style="position:absolute;left:1423.60px;top:486.23px;font-size:13.66px;color:#aab0b8;white-space:nowrap;line-height:1;transform-origin:0 0;transform:scaleX(1.0029);">R-Digit 3</div><svg style="position:absolute;left:1487.8px;top:489.9px" width="7" height="4"><path d="M0 0 L6 0 L3.0 2.7 Z" fill="#bcc1c8"/></svg><svg style="position:absolute;left:1733.3px;top:481.5px" width="30" height="20"><rect x="14" y="5.8" width="13.5" height="8.4" rx="4" fill="#5c5c5c" stroke="#000" stroke-width="1.1"/><circle cx="10" cy="10" r="8" fill="#2a40a8" stroke="#000" stroke-width="1.1"/><circle cx="10" cy="10" r="3.4" fill="#fff"/></svg><div style="position:absolute;left:1785.7px;top:479.7px;width:98.29999999999995px;height:23.30000000000001px;background:#fff;border:1px solid #aab2bd"></div><div style="position:absolute;left:1790.60px;top:485.93px;font-size:13.66px;color:#aab0b8;white-space:nowrap;line-height:1;transform-origin:0 0;transform:scaleX(0.9250);">Blue PPG</div><svg style="position:absolute;left:1874.8px;top:489.9px" width="7" height="4"><path d="M0 0 L6 0 L3.0 2.7 Z" fill="#bcc1c8"/></svg><div style="position:absolute;left:714px;top:506px;width:36px;height:18px;background:linear-gradient(#f3f5f8,#dfe4eb);border-right:1px solid #c9d0da;border-radius:3px 3px 0 0"></div><div style="position:absolute;left:725.40px;top:510.77px;font-size:10.61px;color:#2a3444;white-space:nowrap;line-height:1;transform-origin:0 0;transform:scaleX(0.8870);">HR</div><div style="position:absolute;left:750px;top:506px;width:57px;height:18px;background:linear-gradient(#f3f5f8,#dfe4eb);border-right:1px solid #c9d0da;border-radius:3px 3px 0 0"></div><div style="position:absolute;left:761.80px;top:510.77px;font-size:10.61px;color:#2a3444;white-space:nowrap;line-height:1;transform-origin:0 0;transform:scaleX(1.0053);">Amp %</div><div style="position:absolute;left:807px;top:506px;width:34px;height:18px;background:linear-gradient(#f3f5f8,#dfe4eb);border-right:1px solid #c9d0da;border-radius:3px 3px 0 0"></div><div style="position:absolute;left:818.70px;top:510.77px;font-size:10.61px;color:#2a3444;white-space:nowrap;line-height:1;transform-origin:0 0;transform:scaleX(0.7955);">RT</div><div style="position:absolute;left:841px;top:506px;width:52px;height:18px;background:linear-gradient(#f3f5f8,#dfe4eb);border-right:1px solid #c9d0da;border-radius:3px 3px 0 0"></div><div style="position:absolute;left:854.60px;top:510.77px;font-size:10.61px;color:#2a3444;white-space:nowrap;line-height:1;transform-origin:0 0;transform:scaleX(0.9521);">Label</div><div style="position:absolute;left:714px;top:524px;width:179px;height:1px;background:#c5ccd6"></div><div style="position:absolute;left:726.50px;top:528.94px;font-size:12.35px;color:#2f3b4d;white-space:nowrap;line-height:1;transform-origin:0 0;transform:scaleX(0.8677);">62</div><div style="position:absolute;left:766.30px;top:528.94px;font-size:12.35px;color:#2f3b4d;white-space:nowrap;line-height:1;transform-origin:0 0;transform:scaleX(0.8627);">17.94</div><div style="position:absolute;left:814.50px;top:528.94px;font-size:12.35px;color:#2f3b4d;white-space:nowrap;line-height:1;transform-origin:0 0;transform:scaleX(0.9209);">500</div><div style="position:absolute;left:841px;top:526px;width:51.5px;height:17px;background:#fff;border:1px solid #aab2bd"></div><div style="position:absolute;left:846.80px;top:529.77px;font-size:10.90px;color:#b4b9c1;white-space:nowrap;line-height:1;transform-origin:0 0;transform:scaleX(0.9787);">None</div><svg style="position:absolute;left:882.6px;top:533.0px" width="7" height="4"><path d="M0 0 L6 0 L3.0 2.7 Z" fill="#c4c8ce"/></svg><div style="position:absolute;left:1021.6px;top:521.4px;width:153.89999999999998px;height:20.800000000000068px;background:#fff;border:1px solid #aab2bd"></div><div style="position:absolute;left:1026.50px;top:525.92px;font-size:13.08px;color:#2a2f36;white-space:nowrap;line-height:1;transform-origin:0 0;transform:scaleX(0.8655);">Recalculate Parameters</div><svg style="position:absolute;left:1165.3px;top:530.3px" width="7" height="4"><path d="M0 0 L6 0 L3.0 2.7 Z" fill="#1d1d1d"/></svg><div style="position:absolute;left:715px;top:548px;width:465px;height:331px;background:#000"></div><svg style="position:absolute;left:0;top:0" width="1920" height="1080"><rect x="762.0" y="555" width="406.5" height="317" fill="none" stroke="#9c5c28" stroke-width="1"/><line x1="754" y1="555.00" x2="761.5" y2="555.00" stroke="#f2f2f2" stroke-width="1.1"/><line x1="756.5" y1="562.92" x2="761.5" y2="562.92" stroke="#e4e4e4" stroke-width="1"/><line x1="756.5" y1="570.85" x2="761.5" y2="570.85" stroke="#e4e4e4" stroke-width="1"/><line x1="756.5" y1="578.77" x2="761.5" y2="578.77" stroke="#e4e4e4" stroke-width="1"/><line x1="756.5" y1="586.70" x2="761.5" y2="586.70" stroke="#e4e4e4" stroke-width="1"/><line x1="754" y1="594.62" x2="761.5" y2="594.62" stroke="#f2f2f2" stroke-width="1.1"/><line x1="756.5" y1="602.55" x2="761.5" y2="602.55" stroke="#e4e4e4" stroke-width="1"/><line x1="756.5" y1="610.48" x2="761.5" y2="610.48" stroke="#e4e4e4" stroke-width="1"/><line x1="756.5" y1="618.40" x2="761.5" y2="618.40" stroke="#e4e4e4" stroke-width="1"/><line x1="756.5" y1="626.33" x2="761.5" y2="626.33" stroke="#e4e4e4" stroke-width="1"/><line x1="754" y1="634.25" x2="761.5" y2="634.25" stroke="#f2f2f2" stroke-width="1.1"/><line x1="756.5" y1="642.17" x2="761.5" y2="642.17" stroke="#e4e4e4" stroke-width="1"/><line x1="756.5" y1="650.10" x2="761.5" y2="650.10" stroke="#e4e4e4" stroke-width="1"/><line x1="756.5" y1="658.02" x2="761.5" y2="658.02" stroke="#e4e4e4" stroke-width="1"/><line x1="756.5" y1="665.95" x2="761.5" y2="665.95" stroke="#e4e4e4" stroke-width="1"/><line x1="754" y1="673.88" x2="761.5" y2="673.88" stroke="#f2f2f2" stroke-width="1.1"/><line x1="756.5" y1="681.80" x2="761.5" y2="681.80" stroke="#e4e4e4" stroke-width="1"/><line x1="756.5" y1="689.73" x2="761.5" y2="689.73" stroke="#e4e4e4" stroke-width="1"/><line x1="756.5" y1="697.65" x2="761.5" y2="697.65" stroke="#e4e4e4" stroke-width="1"/><line x1="756.5" y1="705.58" x2="761.5" y2="705.58" stroke="#e4e4e4" stroke-width="1"/><line x1="754" y1="713.50" x2="761.5" y2="713.50" stroke="#f2f2f2" stroke-width="1.1"/><line x1="756.5" y1="721.42" x2="761.5" y2="721.42" stroke="#e4e4e4" stroke-width="1"/><line x1="756.5" y1="729.35" x2="761.5" y2="729.35" stroke="#e4e4e4" stroke-width="1"/><line x1="756.5" y1="737.27" x2="761.5" y2="737.27" stroke="#e4e4e4" stroke-width="1"/><line x1="756.5" y1="745.20" x2="761.5" y2="745.20" stroke="#e4e4e4" stroke-width="1"/><line x1="754" y1="753.12" x2="761.5" y2="753.12" stroke="#f2f2f2" stroke-width="1.1"/><line x1="756.5" y1="761.05" x2="761.5" y2="761.05" stroke="#e4e4e4" stroke-width="1"/><line x1="756.5" y1="768.98" x2="761.5" y2="768.98" stroke="#e4e4e4" stroke-width="1"/><line x1="756.5" y1="776.90" x2="761.5" y2="776.90" stroke="#e4e4e4" stroke-width="1"/><line x1="756.5" y1="784.83" x2="761.5" y2="784.83" stroke="#e4e4e4" stroke-width="1"/><line x1="754" y1="792.75" x2="761.5" y2="792.75" stroke="#f2f2f2" stroke-width="1.1"/><line x1="756.5" y1="800.67" x2="761.5" y2="800.67" stroke="#e4e4e4" stroke-width="1"/><line x1="756.5" y1="808.60" x2="761.5" y2="808.60" stroke="#e4e4e4" stroke-width="1"/><line x1="756.5" y1="816.52" x2="761.5" y2="816.52" stroke="#e4e4e4" stroke-width="1"/><line x1="756.5" y1="824.45" x2="761.5" y2="824.45" stroke="#e4e4e4" stroke-width="1"/><line x1="754" y1="832.38" x2="761.5" y2="832.38" stroke="#f2f2f2" stroke-width="1.1"/><line x1="756.5" y1="840.30" x2="761.5" y2="840.30" stroke="#e4e4e4" stroke-width="1"/><line x1="756.5" y1="848.23" x2="761.5" y2="848.23" stroke="#e4e4e4" stroke-width="1"/><line x1="756.5" y1="856.15" x2="761.5" y2="856.15" stroke="#e4e4e4" stroke-width="1"/><line x1="756.5" y1="864.08" x2="761.5" y2="864.08" stroke="#e4e4e4" stroke-width="1"/><line x1="754" y1="872.00" x2="761.5" y2="872.00" stroke="#f2f2f2" stroke-width="1.1"/><rect x="759.0" y="555" width="3.5" height="317" fill="#f7941d"/><path d="M762.9,655.7 C763.7,658.1 765.9,663.8 767.6,669.8 C769.3,675.8 770.9,685.1 773.1,691.9 C775.3,698.7 778.2,703.7 781.0,710.8 C783.8,717.9 787.1,728.9 789.6,734.4 C792.1,739.9 794.0,741.7 795.9,743.8 C797.8,745.9 798.9,746.7 800.7,747.0 C802.6,747.3 804.1,746.3 807.0,745.4 C809.9,744.5 814.3,743.3 818.0,741.5 C821.7,739.7 825.3,736.9 829.0,734.4 C832.7,731.9 837.6,729.4 840.0,726.5 C842.4,723.6 842.3,721.7 843.2,717.0 C844.1,712.3 844.7,705.5 845.5,698.2 C846.3,690.9 847.1,680.9 847.9,673.0 C848.7,665.1 849.2,656.4 850.2,651.0 C851.2,645.6 852.8,641.2 854.2,640.7 C855.7,640.2 857.3,644.8 858.9,647.8 C860.5,650.8 862.3,655.4 863.6,658.8 C864.9,662.2 865.5,663.6 866.8,668.3 C868.1,673.0 870.2,682.1 871.5,687.1 C872.8,692.1 873.0,694.2 874.6,698.2 C876.2,702.2 878.6,705.3 881.0,710.8 C883.4,716.3 886.2,725.4 888.8,731.2 C891.4,737.0 894.9,742.8 896.7,745.4 C898.5,748.0 897.2,747.5 899.8,747.0 C902.4,746.5 907.7,744.3 912.4,742.2 C917.1,740.1 923.0,737.8 928.2,734.4 C933.5,731.0 940.2,725.7 943.9,721.8 C947.6,717.9 948.4,717.1 950.2,710.8 C952.1,704.5 953.5,691.1 955.0,684.0 C956.5,676.9 957.8,669.5 959.2,668.3 C960.6,667.1 961.8,672.2 963.3,676.7 C964.8,681.2 966.6,690.3 968.3,695.0 C970.0,699.7 971.2,704.2 973.3,705.0 C975.4,705.8 978.6,699.8 980.8,699.7 C983.0,699.6 984.3,701.4 986.7,704.2 C989.1,707.0 992.2,713.5 995.0,716.7 C997.8,719.9 1000.0,722.9 1003.3,723.3 C1006.6,723.7 1011.8,719.9 1015.0,719.2 C1018.2,718.5 1020.7,720.2 1022.5,719.2 C1024.3,718.2 1024.8,717.6 1025.8,713.3 C1026.8,709.0 1027.3,703.0 1028.3,693.3 C1029.3,683.6 1030.3,667.2 1031.7,655.0 C1033.1,642.8 1035.3,625.3 1036.7,620.0 C1038.1,614.7 1038.5,619.4 1040.0,623.3 C1041.5,627.2 1043.6,632.7 1045.8,643.3 C1048.0,653.9 1050.4,672.2 1053.3,686.7 C1056.2,701.2 1060.2,719.7 1063.3,730.0 C1066.4,740.3 1068.9,742.5 1071.7,748.3 C1074.5,754.1 1077.5,762.1 1080.0,765.0 C1082.5,767.9 1083.4,766.9 1086.7,765.8 C1090.0,764.7 1095.8,761.2 1100.0,758.3 C1104.2,755.4 1108.7,751.3 1111.7,748.3 C1114.8,745.2 1116.6,744.7 1118.3,740.0 C1120.0,735.3 1120.6,730.0 1121.7,720.0 C1122.8,710.0 1123.9,693.3 1125.0,680.0 C1126.1,666.7 1127.0,649.2 1128.3,640.0 C1129.5,630.8 1131.2,627.2 1132.5,625.0 C1133.8,622.8 1134.3,623.4 1135.8,626.7 C1137.3,630.0 1139.0,633.3 1141.7,645.0 C1144.4,656.7 1148.7,683.7 1151.7,696.7 C1154.8,709.8 1157.4,714.7 1160.0,723.3 C1162.6,731.9 1166.2,744.1 1167.5,748.3" fill="none" stroke="#f5cc10" stroke-width="3" stroke-linejoin="round" stroke-linecap="round"/></svg><div style="position:absolute;left:723.80px;top:549.37px;font-size:12.79px;color:#ffffff;white-space:nowrap;line-height:1;transform-origin:0 0;transform:scaleX(0.9728);">20.0</div><div style="position:absolute;left:723.80px;top:589.00px;font-size:12.79px;color:#ffffff;white-space:nowrap;line-height:1;transform-origin:0 0;transform:scaleX(0.9728);">15.0</div><div style="position:absolute;left:723.80px;top:628.62px;font-size:12.79px;color:#ffffff;white-space:nowrap;line-height:1;transform-origin:0 0;transform:scaleX(0.9728);">10.0</div><div style="position:absolute;left:730.50px;top:668.25px;font-size:12.79px;color:#ffffff;white-space:nowrap;line-height:1;transform-origin:0 0;transform:scaleX(0.9843);">5.0</div><div style="position:absolute;left:730.50px;top:707.87px;font-size:12.79px;color:#ffffff;white-space:nowrap;line-height:1;transform-origin:0 0;transform:scaleX(0.9843);">0.0</div><div style="position:absolute;left:726.00px;top:747.50px;font-size:12.79px;color:#ffffff;white-space:nowrap;line-height:1;transform-origin:0 0;transform:scaleX(0.9971);">-5.0</div><div style="position:absolute;left:718.80px;top:787.12px;font-size:12.79px;color:#ffffff;white-space:nowrap;line-height:1;transform-origin:0 0;transform:scaleX(1.0013);">-10.0</div><div style="position:absolute;left:718.80px;top:826.75px;font-size:12.79px;color:#ffffff;white-space:nowrap;line-height:1;transform-origin:0 0;transform:scaleX(1.0013);">-15.0</div><div style="position:absolute;left:718.80px;top:866.37px;font-size:12.79px;color:#ffffff;white-space:nowrap;line-height:1;transform-origin:0 0;transform:scaleX(1.0013);">-20.0</div><div style="position:absolute;left:778.50px;top:555.06px;font-size:10.32px;color:#f24a22;white-space:nowrap;line-height:1;transform-origin:0 0;transform:scaleX(1.0336);">Amp %</div><div style="position:absolute;left:1141.50px;top:827.96px;font-size:12.21px;color:#f24a22;white-space:nowrap;line-height:1;transform-origin:0 0;transform:scaleX(0.8884);">Time</div><div style="position:absolute;left:715px;top:885.7px;width:78px;height:23.299999999999955px;background:#fff;border:1px solid #aab2bd"></div><div style="position:absolute;left:719.60px;top:892.23px;font-size:13.66px;color:#aab0b8;white-space:nowrap;line-height:1;transform-origin:0 0;transform:scaleX(1.0029);">R-Digit 4</div><svg style="position:absolute;left:783.8px;top:895.9px" width="7" height="4"><path d="M0 0 L6 0 L3.0 2.7 Z" fill="#bcc1c8"/></svg><svg style="position:absolute;left:1029.3px;top:887.5px" width="30" height="20"><rect x="14" y="5.8" width="13.5" height="8.4" rx="4" fill="#5c5c5c" stroke="#000" stroke-width="1.1"/><circle cx="10" cy="10" r="8" fill="#f0ea10" stroke="#000" stroke-width="1.1"/><circle cx="10" cy="10" r="3.4" fill="#fff"/></svg><div style="position:absolute;left:1081.7px;top:885.7px;width:98.29999999999995px;height:23.299999999999955px;background:#fff;border:1px solid #aab2bd"></div><div style="position:absolute;left:1086.60px;top:891.93px;font-size:13.66px;color:#aab0b8;white-space:nowrap;line-height:1;transform-origin:0 0;transform:scaleX(0.9250);">Yellow PPG</div><svg style="position:absolute;left:1170.8px;top:895.9px" width="7" height="4"><path d="M0 0 L6 0 L3.0 2.7 Z" fill="#bcc1c8"/></svg><div style="position:absolute;left:1183px;top:506px;width:36px;height:18px;background:linear-gradient(#f3f5f8,#dfe4eb);border-right:1px solid #c9d0da;border-radius:3px 3px 0 0"></div><div style="position:absolute;left:1194.40px;top:510.77px;font-size:10.61px;color:#2a3444;white-space:nowrap;line-height:1;transform-origin:0 0;transform:scaleX(0.8870);">HR</div><div style="position:absolute;left:1219px;top:506px;width:57px;height:18px;background:linear-gradient(#f3f5f8,#dfe4eb);border-right:1px solid #c9d0da;border-radius:3px 3px 0 0"></div><div style="position:absolute;left:1230.80px;top:510.77px;font-size:10.61px;color:#2a3444;white-space:nowrap;line-height:1;transform-origin:0 0;transform:scaleX(1.0053);">Amp %</div><div style="position:absolute;left:1276px;top:506px;width:34px;height:18px;background:linear-gradient(#f3f5f8,#dfe4eb);border-right:1px solid #c9d0da;border-radius:3px 3px 0 0"></div><div style="position:absolute;left:1287.70px;top:510.77px;font-size:10.61px;color:#2a3444;white-space:nowrap;line-height:1;transform-origin:0 0;transform:scaleX(0.7955);">RT</div><div style="position:absolute;left:1310px;top:506px;width:52px;height:18px;background:linear-gradient(#f3f5f8,#dfe4eb);border-right:1px solid #c9d0da;border-radius:3px 3px 0 0"></div><div style="position:absolute;left:1323.60px;top:510.77px;font-size:10.61px;color:#2a3444;white-space:nowrap;line-height:1;transform-origin:0 0;transform:scaleX(0.9521);">Label</div><div style="position:absolute;left:1183px;top:524px;width:179px;height:1px;background:#c5ccd6"></div><div style="position:absolute;left:1195.50px;top:528.94px;font-size:12.35px;color:#2f3b4d;white-space:nowrap;line-height:1;transform-origin:0 0;transform:scaleX(0.8677);">62</div><div style="position:absolute;left:1235.30px;top:528.94px;font-size:12.35px;color:#2f3b4d;white-space:nowrap;line-height:1;transform-origin:0 0;transform:scaleX(0.8627);">13.75</div><div style="position:absolute;left:1283.50px;top:528.94px;font-size:12.35px;color:#2f3b4d;white-space:nowrap;line-height:1;transform-origin:0 0;transform:scaleX(0.9209);">490</div><div style="position:absolute;left:1310px;top:526px;width:51.5px;height:17px;background:#fff;border:1px solid #aab2bd"></div><div style="position:absolute;left:1315.80px;top:529.77px;font-size:10.90px;color:#b4b9c1;white-space:nowrap;line-height:1;transform-origin:0 0;transform:scaleX(0.9787);">None</div><svg style="position:absolute;left:1351.6px;top:533.0px" width="7" height="4"><path d="M0 0 L6 0 L3.0 2.7 Z" fill="#c4c8ce"/></svg><div style="position:absolute;left:1490.6px;top:521.4px;width:153.9000000000001px;height:20.800000000000068px;background:#fff;border:1px solid #aab2bd"></div><div style="position:absolute;left:1495.50px;top:525.92px;font-size:13.08px;color:#2a2f36;white-space:nowrap;line-height:1;transform-origin:0 0;transform:scaleX(0.8655);">Recalculate Parameters</div><svg style="position:absolute;left:1634.3px;top:530.3px" width="7" height="4"><path d="M0 0 L6 0 L3.0 2.7 Z" fill="#1d1d1d"/></svg><div style="position:absolute;left:1184px;top:548px;width:465px;height:331px;background:#000"></div><svg style="position:absolute;left:0;top:0" width="1920" height="1080"><rect x="1231.0" y="555" width="406.5" height="317" fill="none" stroke="#9c5c28" stroke-width="1"/><line x1="1223" y1="555.00" x2="1230.5" y2="555.00" stroke="#f2f2f2" stroke-width="1.1"/><line x1="1225.5" y1="562.92" x2="1230.5" y2="562.92" stroke="#e4e4e4" stroke-width="1"/><line x1="1225.5" y1="570.85" x2="1230.5" y2="570.85" stroke="#e4e4e4" stroke-width="1"/><line x1="1225.5" y1="578.77" x2="1230.5" y2="578.77" stroke="#e4e4e4" stroke-width="1"/><line x1="1225.5" y1="586.70" x2="1230.5" y2="586.70" stroke="#e4e4e4" stroke-width="1"/><line x1="1223" y1="594.62" x2="1230.5" y2="594.62" stroke="#f2f2f2" stroke-width="1.1"/><line x1="1225.5" y1="602.55" x2="1230.5" y2="602.55" stroke="#e4e4e4" stroke-width="1"/><line x1="1225.5" y1="610.48" x2="1230.5" y2="610.48" stroke="#e4e4e4" stroke-width="1"/><line x1="1225.5" y1="618.40" x2="1230.5" y2="618.40" stroke="#e4e4e4" stroke-width="1"/><line x1="1225.5" y1="626.33" x2="1230.5" y2="626.33" stroke="#e4e4e4" stroke-width="1"/><line x1="1223" y1="634.25" x2="1230.5" y2="634.25" stroke="#f2f2f2" stroke-width="1.1"/><line x1="1225.5" y1="642.17" x2="1230.5" y2="642.17" stroke="#e4e4e4" stroke-width="1"/><line x1="1225.5" y1="650.10" x2="1230.5" y2="650.10" stroke="#e4e4e4" stroke-width="1"/><line x1="1225.5" y1="658.02" x2="1230.5" y2="658.02" stroke="#e4e4e4" stroke-width="1"/><line x1="1225.5" y1="665.95" x2="1230.5" y2="665.95" stroke="#e4e4e4" stroke-width="1"/><line x1="1223" y1="673.88" x2="1230.5" y2="673.88" stroke="#f2f2f2" stroke-width="1.1"/><line x1="1225.5" y1="681.80" x2="1230.5" y2="681.80" stroke="#e4e4e4" stroke-width="1"/><line x1="1225.5" y1="689.73" x2="1230.5" y2="689.73" stroke="#e4e4e4" stroke-width="1"/><line x1="1225.5" y1="697.65" x2="1230.5" y2="697.65" stroke="#e4e4e4" stroke-width="1"/><line x1="1225.5" y1="705.58" x2="1230.5" y2="705.58" stroke="#e4e4e4" stroke-width="1"/><line x1="1223" y1="713.50" x2="1230.5" y2="713.50" stroke="#f2f2f2" stroke-width="1.1"/><line x1="1225.5" y1="721.42" x2="1230.5" y2="721.42" stroke="#e4e4e4" stroke-width="1"/><line x1="1225.5" y1="729.35" x2="1230.5" y2="729.35" stroke="#e4e4e4" stroke-width="1"/><line x1="1225.5" y1="737.27" x2="1230.5" y2="737.27" stroke="#e4e4e4" stroke-width="1"/><line x1="1225.5" y1="745.20" x2="1230.5" y2="745.20" stroke="#e4e4e4" stroke-width="1"/><line x1="1223" y1="753.12" x2="1230.5" y2="753.12" stroke="#f2f2f2" stroke-width="1.1"/><line x1="1225.5" y1="761.05" x2="1230.5" y2="761.05" stroke="#e4e4e4" stroke-width="1"/><line x1="1225.5" y1="768.98" x2="1230.5" y2="768.98" stroke="#e4e4e4" stroke-width="1"/><line x1="1225.5" y1="776.90" x2="1230.5" y2="776.90" stroke="#e4e4e4" stroke-width="1"/><line x1="1225.5" y1="784.83" x2="1230.5" y2="784.83" stroke="#e4e4e4" stroke-width="1"/><line x1="1223" y1="792.75" x2="1230.5" y2="792.75" stroke="#f2f2f2" stroke-width="1.1"/><line x1="1225.5" y1="800.67" x2="1230.5" y2="800.67" stroke="#e4e4e4" stroke-width="1"/><line x1="1225.5" y1="808.60" x2="1230.5" y2="808.60" stroke="#e4e4e4" stroke-width="1"/><line x1="1225.5" y1="816.52" x2="1230.5" y2="816.52" stroke="#e4e4e4" stroke-width="1"/><line x1="1225.5" y1="824.45" x2="1230.5" y2="824.45" stroke="#e4e4e4" stroke-width="1"/><line x1="1223" y1="832.38" x2="1230.5" y2="832.38" stroke="#f2f2f2" stroke-width="1.1"/><line x1="1225.5" y1="840.30" x2="1230.5" y2="840.30" stroke="#e4e4e4" stroke-width="1"/><line x1="1225.5" y1="848.23" x2="1230.5" y2="848.23" stroke="#e4e4e4" stroke-width="1"/><line x1="1225.5" y1="856.15" x2="1230.5" y2="856.15" stroke="#e4e4e4" stroke-width="1"/><line x1="1225.5" y1="864.08" x2="1230.5" y2="864.08" stroke="#e4e4e4" stroke-width="1"/><line x1="1223" y1="872.00" x2="1230.5" y2="872.00" stroke="#f2f2f2" stroke-width="1.1"/><rect x="1228.0" y="555" width="3.5" height="317" fill="#f7941d"/><path d="M1232.1,669.9 C1233.3,673.9 1236.2,686.0 1239.3,693.9 C1242.4,701.8 1247.0,710.1 1250.9,717.2 C1254.8,724.3 1260.0,733.1 1262.6,736.7 C1265.2,740.3 1264.3,738.3 1266.5,738.6 C1268.7,738.9 1272.1,739.1 1275.6,738.6 C1279.0,738.1 1282.0,738.1 1287.2,735.4 C1292.4,732.7 1303.0,725.2 1306.7,722.4 C1310.4,719.6 1308.2,723.5 1309.3,718.5 C1310.4,713.5 1311.9,701.9 1313.2,692.6 C1314.5,683.3 1315.6,669.0 1317.0,662.8 C1318.4,656.6 1319.2,653.7 1321.6,655.6 C1324.0,657.5 1328.4,667.8 1331.3,674.4 C1334.2,681.0 1335.2,687.4 1339.1,695.2 C1343.0,703.0 1350.5,714.0 1354.6,721.1 C1358.7,728.2 1361.5,735.0 1363.7,738.0 C1365.9,741.0 1364.8,739.7 1367.6,739.3 C1370.4,738.9 1376.5,736.3 1380.6,735.4 C1384.7,734.5 1386.8,736.7 1392.2,734.1 C1397.6,731.5 1408.9,723.3 1413.0,719.8 C1417.1,716.3 1415.2,719.6 1416.9,713.3 C1418.6,707.0 1421.6,688.2 1423.3,682.2 C1425.0,676.2 1425.4,675.1 1427.2,677.0 C1429.0,678.9 1432.2,688.3 1434.2,693.3 C1436.2,698.2 1437.7,704.5 1439.2,706.7 C1440.7,708.9 1441.6,707.4 1443.3,706.7 C1445.0,706.0 1447.2,702.4 1449.2,702.5 C1451.2,702.6 1452.4,704.6 1455.0,707.5 C1457.6,710.4 1462.2,717.6 1465.0,720.0 C1467.8,722.4 1468.9,722.0 1471.7,721.7 C1474.5,721.4 1478.5,718.9 1481.7,718.3 C1484.9,717.7 1488.9,719.1 1490.8,718.3 C1492.7,717.5 1492.3,718.6 1493.3,713.3 C1494.3,708.0 1495.5,697.2 1496.7,686.7 C1498.0,676.2 1499.4,657.9 1500.8,650.0 C1502.2,642.1 1503.5,639.8 1505.0,639.2 C1506.5,638.7 1507.5,638.8 1510.0,646.7 C1512.5,654.6 1517.0,676.7 1520.0,686.7 C1523.0,696.7 1525.5,698.9 1528.3,706.7 C1531.1,714.5 1533.6,725.7 1536.7,733.3 C1539.8,740.9 1544.2,749.0 1546.7,752.5 C1549.2,756.0 1548.7,754.5 1551.7,754.2 C1554.8,753.9 1559.5,753.9 1565.0,750.8 C1570.5,747.7 1581.1,739.5 1585.0,735.8 C1588.9,732.0 1587.0,735.6 1588.3,728.3 C1589.5,720.9 1591.1,703.9 1592.5,691.7 C1593.9,679.5 1595.3,662.6 1596.7,655.0 C1598.1,647.4 1598.9,645.5 1600.8,645.8 C1602.7,646.1 1605.1,648.0 1608.3,656.7 C1611.5,665.5 1616.7,687.8 1620.0,698.3 C1623.3,708.8 1625.5,712.8 1628.3,720.0 C1631.1,727.2 1635.3,738.1 1636.7,741.7" fill="none" stroke="#858585" stroke-width="3" stroke-linejoin="round" stroke-linecap="round"/></svg><div style="position:absolute;left:1192.80px;top:549.37px;font-size:12.79px;color:#ffffff;white-space:nowrap;line-height:1;transform-origin:0 0;transform:scaleX(0.9728);">20.0</div><div style="position:absolute;left:1192.80px;top:589.00px;font-size:12.79px;color:#ffffff;white-space:nowrap;line-height:1;transform-origin:0 0;transform:scaleX(0.9728);">15.0</div><div style="position:absolute;left:1192.80px;top:628.62px;font-size:12.79px;color:#ffffff;white-space:nowrap;line-height:1;transform-origin:0 0;transform:scaleX(0.9728);">10.0</div><div style="position:absolute;left:1199.50px;top:668.25px;font-size:12.79px;color:#ffffff;white-space:nowrap;line-height:1;transform-origin:0 0;transform:scaleX(0.9843);">5.0</div><div style="position:absolute;left:1199.50px;top:707.87px;font-size:12.79px;color:#ffffff;white-space:nowrap;line-height:1;transform-origin:0 0;transform:scaleX(0.9843);">0.0</div><div style="position:absolute;left:1195.00px;top:747.50px;font-size:12.79px;color:#ffffff;white-space:nowrap;line-height:1;transform-origin:0 0;transform:scaleX(0.9971);">-5.0</div><div style="position:absolute;left:1187.80px;top:787.12px;font-size:12.79px;color:#ffffff;white-space:nowrap;line-height:1;transform-origin:0 0;transform:scaleX(1.0013);">-10.0</div><div style="position:absolute;left:1187.80px;top:826.75px;font-size:12.79px;color:#ffffff;white-space:nowrap;line-height:1;transform-origin:0 0;transform:scaleX(1.0013);">-15.0</div><div style="position:absolute;left:1187.80px;top:866.37px;font-size:12.79px;color:#ffffff;white-space:nowrap;line-height:1;transform-origin:0 0;transform:scaleX(1.0013);">-20.0</div><div style="position:absolute;left:1247.50px;top:555.06px;font-size:10.32px;color:#f24a22;white-space:nowrap;line-height:1;transform-origin:0 0;transform:scaleX(1.0336);">Amp %</div><div style="position:absolute;left:1610.50px;top:827.96px;font-size:12.21px;color:#f24a22;white-space:nowrap;line-height:1;transform-origin:0 0;transform:scaleX(0.8884);">Time</div><div style="position:absolute;left:1184px;top:885.7px;width:78px;height:23.299999999999955px;background:#fff;border:1px solid #aab2bd"></div><div style="position:absolute;left:1188.60px;top:892.23px;font-size:13.66px;color:#aab0b8;white-space:nowrap;line-height:1;transform-origin:0 0;transform:scaleX(1.0029);">R-Digit 5</div><svg style="position:absolute;left:1252.8px;top:895.9px" width="7" height="4"><path d="M0 0 L6 0 L3.0 2.7 Z" fill="#bcc1c8"/></svg><svg style="position:absolute;left:1498.3px;top:887.5px" width="30" height="20"><rect x="14" y="5.8" width="13.5" height="8.4" rx="4" fill="#5c5c5c" stroke="#000" stroke-width="1.1"/><circle cx="10" cy="10" r="8" fill="#c0c0c0" stroke="#000" stroke-width="1.1"/><circle cx="10" cy="10" r="3.4" fill="#fff"/></svg><div style="position:absolute;left:1550.7px;top:885.7px;width:98.29999999999995px;height:23.299999999999955px;background:#fff;border:1px solid #aab2bd"></div><div style="position:absolute;left:1555.60px;top:891.93px;font-size:13.66px;color:#aab0b8;white-space:nowrap;line-height:1;transform-origin:0 0;transform:scaleX(0.9250);">Gray PPG</div><svg style="position:absolute;left:1639.8px;top:895.9px" width="7" height="4"><path d="M0 0 L6 0 L3.0 2.7 Z" fill="#bcc1c8"/></svg><div style="position:absolute;left:947px;top:99px;width:2px;height:406px;background:#8d98a8"></div><div style="position:absolute;left:1416px;top:99px;width:2px;height:406px;background:#8d98a8"></div><div style="position:absolute;left:1181px;top:505px;width:2px;height:406px;background:#8d98a8"></div><div style="position:absolute;left:1650px;top:505px;width:2px;height:406px;background:#8d98a8"></div><div style="position:absolute;left:713.5px;top:505px;width:1.6px;height:406px;background:#9aa4b2"></div><div style="position:absolute;left:479px;top:503.6px;width:1407px;height:1.4px;background:#97a1af"></div><div style="position:absolute;left:479px;top:473px;width:1407px;height:1px;background:#d0d7e1"></div><div style="position:absolute;left:478px;top:916px;width:1409px;height:63px;border:1px solid #8a95a5;border-radius:3px;background:#bcc8d8"></div><div style="position:absolute;left:485.00px;top:921.42px;font-size:12.50px;color:#2a3340;white-space:nowrap;line-height:1;transform-origin:0 0;transform:scaleX(1.0514);">Time Range</div><div style="position:absolute;left:567.40px;top:921.42px;font-size:12.50px;color:#2a3340;white-space:nowrap;line-height:1;transform-origin:0 0;transform:scaleX(0.9792);">Scale</div><div style="position:absolute;left:617.50px;top:921.42px;font-size:12.50px;color:#9aa3b0;white-space:nowrap;line-height:1;transform-origin:0 0;transform:scaleX(1.0364);">LP Filter</div><div style="position:absolute;left:682.40px;top:921.42px;font-size:12.50px;color:#9aa3b0;white-space:nowrap;line-height:1;transform-origin:0 0;transform:scaleX(1.0161);">Gain</div><div style="position:absolute;left:721.00px;top:921.42px;font-size:12.50px;color:#2a3340;white-space:nowrap;line-height:1;transform-origin:0 0;transform:scaleX(1.0514);">Cursors</div><div style="position:absolute;left:484.25px;top:939.2px;width:72.14999999999998px;height:25.0px;background:#fff;border:1px solid #aab2bd"></div><div style="position:absolute;left:489.00px;top:945.41px;font-size:15.70px;color:#1a1a1a;white-space:nowrap;line-height:1;transform-origin:0 0;transform:scaleX(0.8685);">4 s</div><svg style="position:absolute;left:546.9px;top:950.2px" width="7" height="4"><path d="M0 0 L6 0 L3.0 2.7 Z" fill="#1a1a1a"/></svg><div style="position:absolute;left:567.4px;top:939.2px;width:39.0px;height:25.0px;background:#fff;border:1px solid #aab2bd"></div><div style="position:absolute;left:572.00px;top:945.41px;font-size:15.70px;color:#1a1a1a;white-space:nowrap;line-height:1;transform-origin:0 0;transform:scaleX(0.8816);">4x</div><svg style="position:absolute;left:596.9px;top:950.2px" width="7" height="4"><path d="M0 0 L6 0 L3.0 2.7 Z" fill="#1a1a1a"/></svg><div style="position:absolute;left:617.4px;top:939.2px;width:54.0px;height:25.0px;background:#fff;border:1px solid #aab2bd"></div><div style="position:absolute;left:622.50px;top:945.41px;font-size:15.70px;color:#b4b9c1;white-space:nowrap;line-height:1;transform-origin:0 0;transform:scaleX(0.8959);">6 Hz</div><svg style="position:absolute;left:661.7px;top:950.2px" width="7" height="4"><path d="M0 0 L6 0 L3.0 2.7 Z" fill="#c4c8ce"/></svg><div style="position:absolute;left:682.4px;top:939.2px;width:32.80000000000007px;height:25.0px;background:#fff;border:1px solid #aab2bd"></div><div style="position:absolute;left:688.20px;top:945.41px;font-size:15.70px;color:#b4b9c1;white-space:nowrap;line-height:1;transform-origin:0 0;transform:scaleX(0.6198);">1</div><svg style="position:absolute;left:705.5px;top:950.2px" width="7" height="4"><path d="M0 0 L6 0 L3.0 2.7 Z" fill="#c4c8ce"/></svg><div style="position:absolute;left:732.7px;top:940.8px;width:23.1px;height:22.3px;background:#fff"></div><div style="position:absolute;left:479px;top:965px;width:1406px;height:12.5px;background:linear-gradient(#f0f1f3,#e4e6ea);border-top:1px solid #d8dce2"></div><svg style="position:absolute;left:484px;top:967px" width="10" height="10"><path d="M6.5 1 L6.5 9 L2.5 5 Z" fill="#8f96a0"/></svg><svg style="position:absolute;left:1872px;top:967px" width="10" height="10"><path d="M3.5 1 L3.5 9 L7.5 5 Z" fill="#8f96a0"/></svg><div style="position:absolute;left:850.2px;top:966.2px;width:182.3px;height:10.2px;background:linear-gradient(#f6f7f9,#dadee5);border:1px solid #9aa2ad;border-bottom-color:#7f8893;border-radius:2px"></div><svg style="position:absolute;left:937px;top:967.5px" width="9" height="8"><path d="M1.5 0.5 V7.5 M4.2 0.5 V7.5 M6.9 0.5 V7.5" stroke="#747c88" stroke-width="1.6"/></svg><div style="position:absolute;left:33px;top:987px;width:1854px;height:54px;border:1px solid #8a95a5;border-radius:3px;background:#bcc8d8"></div><div style="position:absolute;left:86.40px;top:1004.74px;font-size:21.80px;color:#2a3340;white-space:nowrap;line-height:1;transform-origin:0 0;transform:scaleX(0.8898);">Exam Mode: Manual</div><div style="position:absolute;left:406.5px;top:990px;width:120.10000000000002px;height:48.2px;background:linear-gradient(#f4f5f8 0%,#e9ecf1 45%,#d9dee6 52%,#d6dbe3 100%);border:1px solid #c9cfd8;border-bottom:1px solid #eef1f5;border-radius:1px"></div><div style="position:absolute;left:461.60px;top:1005.81px;font-size:19.48px;color:#1f2835;white-space:nowrap;line-height:1;transform-origin:0 0;transform:scaleX(0.9993);">Notes</div><div style="position:absolute;left:531.5px;top:990px;width:120.0px;height:48.2px;background:linear-gradient(#f4f5f8 0%,#e9ecf1 45%,#d9dee6 52%,#d6dbe3 100%);border:1px solid #c9cfd8;border-bottom:1px solid #eef1f5;border-radius:1px"></div><div style="position:absolute;left:586.90px;top:1005.81px;font-size:19.48px;color:#1f2835;white-space:nowrap;line-height:1;transform-origin:0 0;transform:scaleX(0.8947);">Stress</div><div style="position:absolute;left:790.5px;top:990px;width:140.70000000000005px;height:48.2px;background:linear-gradient(#f4f5f8 0%,#e9ecf1 45%,#d9dee6 52%,#d6dbe3 100%);border:1px solid #c9cfd8;border-bottom:1px solid #eef1f5;border-radius:1px"></div><div style="position:absolute;left:843.90px;top:1005.81px;font-size:19.48px;color:#1f2835;white-space:nowrap;line-height:1;transform-origin:0 0;transform:scaleX(0.9498);">Playback</div><div style="position:absolute;left:936px;top:990px;width:130px;height:48.2px;background:linear-gradient(#f4f5f8 0%,#e9ecf1 45%,#d9dee6 52%,#d6dbe3 100%);border:1px solid #c9cfd8;border-bottom:1px solid #eef1f5;border-radius:1px"></div><div style="position:absolute;left:999.50px;top:1005.81px;font-size:19.48px;color:#1f2835;white-space:nowrap;line-height:1;transform-origin:0 0;transform:scaleX(0.9237);">Clear</div><div style="position:absolute;left:1086.8px;top:990px;width:113.40000000000009px;height:48.2px;background:linear-gradient(#f4f5f8 0%,#e9ecf1 45%,#d9dee6 52%,#d6dbe3 100%);border:1px solid #c9cfd8;border-bottom:1px solid #eef1f5;border-radius:4px"></div><div style="position:absolute;left:1143.60px;top:1005.81px;font-size:19.48px;color:#1f2835;white-space:nowrap;line-height:1;transform-origin:0 0;transform:scaleX(1.0094);">Next</div><div style="position:absolute;left:1205.9px;top:990px;width:130.0px;height:48.2px;background:linear-gradient(#f4f5f8 0%,#e9ecf1 45%,#d9dee6 52%,#d6dbe3 100%);border:1px solid #c9cfd8;border-bottom:1px solid #eef1f5;border-radius:1px"></div><div style="position:absolute;left:1269.30px;top:1005.81px;font-size:19.48px;color:#1f2835;white-space:nowrap;line-height:1;transform-origin:0 0;transform:scaleX(0.9366);">Redo</div><div style="position:absolute;left:1475px;top:990px;width:130.4000000000001px;height:48.2px;background:linear-gradient(#f4f5f8 0%,#e9ecf1 45%,#d9dee6 52%,#d6dbe3 100%);border:1px solid #c9cfd8;border-bottom:1px solid #eef1f5;border-radius:1px"></div><div style="position:absolute;left:1537.60px;top:1005.82px;font-size:20.06px;color:#1f2835;white-space:nowrap;line-height:1;transform-origin:0 0;transform:scaleX(0.9764);">Main</div><div style="position:absolute;left:1610px;top:990px;width:130.5999999999999px;height:48.2px;background:linear-gradient(#f4f5f8 0%,#e9ecf1 45%,#d9dee6 52%,#d6dbe3 100%);border:1px solid #c9cfd8;border-bottom:1px solid #eef1f5;border-radius:1px"></div><div style="position:absolute;left:1666.00px;top:1005.82px;font-size:20.06px;color:#1f2835;white-space:nowrap;line-height:1;transform-origin:0 0;transform:scaleX(0.9443);">Patient</div><div style="position:absolute;left:1745px;top:990px;width:130.5999999999999px;height:48.2px;background:linear-gradient(#f4f5f8 0%,#e9ecf1 45%,#d9dee6 52%,#d6dbe3 100%);border:1px solid #c9cfd8;border-bottom:1px solid #eef1f5;border-radius:1px"></div><div style="position:absolute;left:1760.20px;top:1005.82px;font-size:20.06px;color:#1f2835;white-space:nowrap;line-height:1;transform-origin:0 0;transform:scaleX(0.9059);">Review</div><svg style="position:absolute;left:0;top:0" width="1920" height="1080"><defs><linearGradient id="gStress" x1="0" y1="0" x2="0" y2="1"><stop offset="0" stop-color="#d4f0fa"/><stop offset="0.5" stop-color="#9ccbec"/><stop offset="1" stop-color="#5e9ad8"/></linearGradient><linearGradient id="gPlay" x1="0" y1="0" x2="0" y2="1"><stop offset="0" stop-color="#7fcb55"/><stop offset="1" stop-color="#3a9a2a"/></linearGradient><linearGradient id="gBlueL" x1="0" y1="0" x2="0" y2="1"><stop offset="0" stop-color="#d8f4fc"/><stop offset="1" stop-color="#8ab8e4"/></linearGradient><linearGradient id="gOrange" x1="0" y1="0" x2="0" y2="1"><stop offset="0" stop-color="#fbe49a"/><stop offset="1" stop-color="#eeb24e"/></linearGradient><linearGradient id="gDoor" x1="0" y1="0" x2="0" y2="1"><stop offset="0" stop-color="#fcd08a"/><stop offset="1" stop-color="#e89a3a"/></linearGradient></defs><rect x="425.7" y="998.2" width="24.5" height="30.1" fill="#f2f9ff" stroke="#7589a3" stroke-width="1.2"/><line x1="429.1" y1="1003.40" x2="446.7" y2="1003.40" stroke="#9ea6ae" stroke-width="1.4"/><line x1="429.1" y1="1006.73" x2="446.7" y2="1006.73" stroke="#9ea6ae" stroke-width="1.4"/><line x1="429.1" y1="1010.06" x2="446.7" y2="1010.06" stroke="#9ea6ae" stroke-width="1.4"/><line x1="429.1" y1="1013.39" x2="446.7" y2="1013.39" stroke="#9ea6ae" stroke-width="1.4"/><line x1="429.1" y1="1016.72" x2="446.7" y2="1016.72" stroke="#9ea6ae" stroke-width="1.4"/><line x1="429.1" y1="1020.05" x2="446.7" y2="1020.05" stroke="#9ea6ae" stroke-width="1.4"/><line x1="429.1" y1="1023.38" x2="446.7" y2="1023.38" stroke="#9ea6ae" stroke-width="1.4"/><circle cx="563.3" cy="1014" r="14.8" fill="url(#gStress)" stroke="#5b7fa6" stroke-width="1.3"/><path d="M560.4 1005.6 H566.2 V1011.1 H571.3 V1016.9 H566.2 V1022.2 H560.4 V1016.9 H555.3 V1011.1 H560.4 Z" fill="#f4f7fc" stroke="#3f5f88" stroke-width="1.3" stroke-linejoin="round"/><rect x="806.6" y="1000.6" width="27" height="26.5" rx="3" fill="url(#gPlay)" stroke="#2f7a24" stroke-width="1.1"/><path d="M817 1007.5 L826.5 1013.9 L817 1020.3 Z" fill="#ffffff"/><g transform="translate(976.3,1014.6) rotate(-45)"><rect x="-14.5" y="-7.3" width="29" height="14.2" rx="3" fill="#f4a684" stroke="#b86e58" stroke-width="0.7"/><path d="M-11.5 -7.3 H-3 V6.9 H-11.5 A3 3 0 0 1 -14.5 3.9 V-4.3 A3 3 0 0 1 -11.5 -7.3 Z" fill="#86bcf2" stroke="#5a86b8" stroke-width="0.6"/><rect x="-3" y="3" width="17.5" height="3.9" fill="#d8583a"/><path d="M-14.5 3 H-3 V6.9 H-11.5 A3 3 0 0 1 -14.5 3.9 Z" fill="#4a84c4"/></g><path d="M1112.3 1003.8 L1130.7 1013.5 L1112.3 1023.1 Z" fill="url(#gBlueL)" stroke="#5d86b8" stroke-width="1.2" stroke-linejoin="round"/><path d="M1229.5 1025.9 C1230.5 1013 1238 1005.4 1248.4 1005.4 L1248.4 1001.4 L1262.7 1009.9 L1248.4 1018.7 L1248.4 1014.6 C1240 1014.2 1233 1018 1229.5 1025.9 Z" fill="url(#gBlueL)" stroke="#5a7694" stroke-width="1.1" stroke-linejoin="round"/><rect x="1523" y="1002.5" width="4.5" height="8" fill="#f4f6fb" stroke="#8494ac" stroke-width="0.9"/><path d="M1504.6 1011 L1515.9 1001 L1527.2 1011 V1027.5 H1504.6 Z" fill="#f4f6fb" stroke="#8494ac" stroke-width="1"/><path d="M1502 1013 L1515.9 999.5 L1529.8 1013" fill="none" stroke="#5e8c2e" stroke-width="3.6" stroke-linecap="round" stroke-linejoin="round"/><path d="M1502 1013 L1515.9 999.5 L1529.8 1013" fill="none" stroke="#a8d468" stroke-width="1.6" stroke-linecap="round" stroke-linejoin="round"/><rect x="1513.1" y="1008.3" width="5.6" height="5.2" fill="#98acd0" stroke="#55658a" stroke-width="0.9"/><rect x="1512.2" y="1016.2" width="7.4" height="11.3" fill="url(#gDoor)" stroke="#a8642a" stroke-width="0.9"/><rect x="1627.6" y="1004.6" width="29.6" height="19.6" rx="2" fill="#f2f5fc" stroke="#6a7a98" stroke-width="1.2"/><path d="M1630 1021.8 C1630.5 1017 1633 1015.8 1636.3 1015.8 C1639.6 1015.8 1642.6 1017 1643.3 1021.8 Z" fill="#2c3e7a"/><ellipse cx="1636.3" cy="1011.2" rx="4.4" ry="5" fill="#a67c44"/><ellipse cx="1636.6" cy="1012.6" rx="2.5" ry="3" fill="#f0b878"/><line x1="1645.5" y1="1011.3" x2="1654" y2="1011.3" stroke="#5f6e84" stroke-width="1.3"/><line x1="1645.5" y1="1014.5" x2="1654" y2="1014.5" stroke="#5f6e84" stroke-width="1.3"/><line x1="1645.5" y1="1017.8" x2="1651.5" y2="1017.8" stroke="#5f6e84" stroke-width="1.3"/><rect x="1831.6" y="1000.5" width="23.1" height="27.7" rx="2" fill="url(#gOrange)" stroke="#c28a3a" stroke-width="1"/><rect x="1835.5" y="1002.5" width="15.7" height="22.6" fill="#f4f7fc" stroke="#d8a060" stroke-width="0.6"/><path d="M1836.5 1001.5 C1840 1001.5 1841 998 1843.3 998 C1845.6 998 1846.6 1001.5 1850 1001.5 L1849 1003.5 H1837.5 Z" fill="#b8c8e4" stroke="#5c6680" stroke-width="1"/><line x1="1839" y1="1009.30" x2="1847.5" y2="1009.30" stroke="#8f98a8" stroke-width="1.1"/><line x1="1839" y1="1011.35" x2="1847.5" y2="1011.35" stroke="#8f98a8" stroke-width="1.1"/><line x1="1839" y1="1013.40" x2="1847.5" y2="1013.40" stroke="#8f98a8" stroke-width="1.1"/><line x1="1839" y1="1015.45" x2="1847.5" y2="1015.45" stroke="#8f98a8" stroke-width="1.1"/><line x1="1839" y1="1017.50" x2="1847.5" y2="1017.50" stroke="#8f98a8" stroke-width="1.1"/></svg></body></html>
